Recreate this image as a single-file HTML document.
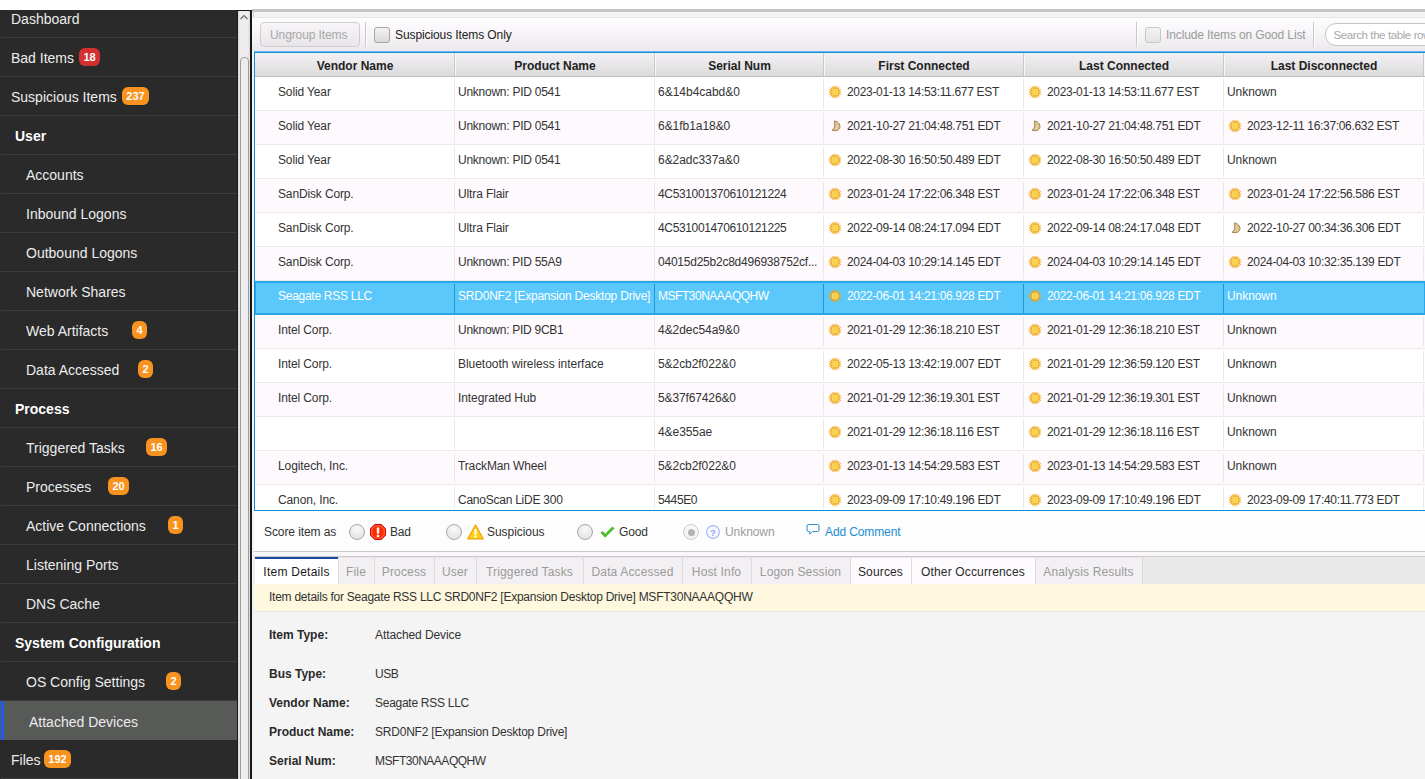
<!DOCTYPE html>
<html><head><meta charset="utf-8"><style>
html,body{margin:0;padding:0;}
body{width:1425px;height:779px;overflow:hidden;position:relative;background:#fff;font-family:"Liberation Sans", sans-serif;}
.t{position:absolute;white-space:nowrap;line-height:1;}
.ic{position:absolute;}
.badge{position:absolute;height:18px;border-radius:6px;color:#fff;font-size:11px;font-weight:700;line-height:18px;text-align:center;}
.radio{position:absolute;width:14px;height:14px;border-radius:50%;border:1px solid #a8a8a8;background:radial-gradient(circle at 50% 30%,#fafafa,#dedede);}
</style></head><body>
<div style="position:absolute;left:0px;top:10px;width:238px;height:769px;background:#2a2a2a"></div><div class="t" style="left:11px;top:11.75px;font-size:14px;color:#ececec;font-weight:400;">Dashboard</div><div style="position:absolute;left:1px;top:37px;width:237px;height:1px;background:#3c3c3c"></div><div class="t" style="left:11px;top:50.75px;font-size:14px;color:#ececec;font-weight:400;">Bad Items</div><div class="badge" style="left:79px;top:48px;width:21px;background:#d3302f">18</div><div style="position:absolute;left:1px;top:76px;width:237px;height:1px;background:#3c3c3c"></div><div class="t" style="left:11px;top:89.75px;font-size:14px;color:#ececec;font-weight:400;">Suspicious Items</div><div class="badge" style="left:122px;top:87px;width:27px;background:#f7931e">237</div><div style="position:absolute;left:1px;top:115px;width:237px;height:1px;background:#3c3c3c"></div><div class="t" style="left:15px;top:128.75px;font-size:14px;color:#ffffff;font-weight:700;">User</div><div style="position:absolute;left:1px;top:154px;width:237px;height:1px;background:#3c3c3c"></div><div class="t" style="left:26px;top:167.75px;font-size:14px;color:#ececec;font-weight:400;">Accounts</div><div style="position:absolute;left:1px;top:193px;width:237px;height:1px;background:#3c3c3c"></div><div class="t" style="left:26px;top:206.75px;font-size:14px;color:#ececec;font-weight:400;">Inbound Logons</div><div style="position:absolute;left:1px;top:232px;width:237px;height:1px;background:#3c3c3c"></div><div class="t" style="left:26px;top:245.75px;font-size:14px;color:#ececec;font-weight:400;">Outbound Logons</div><div style="position:absolute;left:1px;top:271px;width:237px;height:1px;background:#3c3c3c"></div><div class="t" style="left:26px;top:284.75px;font-size:14px;color:#ececec;font-weight:400;">Network Shares</div><div style="position:absolute;left:1px;top:310px;width:237px;height:1px;background:#3c3c3c"></div><div class="t" style="left:26px;top:323.75px;font-size:14px;color:#ececec;font-weight:400;">Web Artifacts</div><div class="badge" style="left:132px;top:321px;width:15px;background:#f7931e">4</div><div style="position:absolute;left:1px;top:349px;width:237px;height:1px;background:#3c3c3c"></div><div class="t" style="left:26px;top:362.75px;font-size:14px;color:#ececec;font-weight:400;">Data Accessed</div><div class="badge" style="left:138px;top:360px;width:15px;background:#f7931e">2</div><div style="position:absolute;left:1px;top:388px;width:237px;height:1px;background:#3c3c3c"></div><div class="t" style="left:15px;top:401.75px;font-size:14px;color:#ffffff;font-weight:700;">Process</div><div style="position:absolute;left:1px;top:427px;width:237px;height:1px;background:#3c3c3c"></div><div class="t" style="left:26px;top:440.75px;font-size:14px;color:#ececec;font-weight:400;">Triggered Tasks</div><div class="badge" style="left:146px;top:438px;width:21px;background:#f7931e">16</div><div style="position:absolute;left:1px;top:466px;width:237px;height:1px;background:#3c3c3c"></div><div class="t" style="left:26px;top:479.75px;font-size:14px;color:#ececec;font-weight:400;">Processes</div><div class="badge" style="left:108px;top:477px;width:21px;background:#f7931e">20</div><div style="position:absolute;left:1px;top:505px;width:237px;height:1px;background:#3c3c3c"></div><div class="t" style="left:26px;top:518.75px;font-size:14px;color:#ececec;font-weight:400;">Active Connections</div><div class="badge" style="left:168px;top:516px;width:15px;background:#f7931e">1</div><div style="position:absolute;left:1px;top:544px;width:237px;height:1px;background:#3c3c3c"></div><div class="t" style="left:26px;top:557.75px;font-size:14px;color:#ececec;font-weight:400;">Listening Ports</div><div style="position:absolute;left:1px;top:583px;width:237px;height:1px;background:#3c3c3c"></div><div class="t" style="left:26px;top:596.75px;font-size:14px;color:#ececec;font-weight:400;">DNS Cache</div><div style="position:absolute;left:1px;top:622px;width:237px;height:1px;background:#3c3c3c"></div><div class="t" style="left:15px;top:635.75px;font-size:14px;color:#ffffff;font-weight:700;">System Configuration</div><div style="position:absolute;left:1px;top:661px;width:237px;height:1px;background:#3c3c3c"></div><div class="t" style="left:26px;top:674.75px;font-size:14px;color:#ececec;font-weight:400;">OS Config Settings</div><div class="badge" style="left:166px;top:672px;width:15px;background:#f7931e">2</div><div style="position:absolute;left:1px;top:700px;width:237px;height:1px;background:#3c3c3c"></div><div style="position:absolute;left:0px;top:701px;width:238px;height:39px;background:#585a58"></div><div style="position:absolute;left:1px;top:701px;width:3px;height:39px;background:#1f5cf5"></div><div class="t" style="left:29px;top:714.55px;font-size:14px;color:#ececec;font-weight:400;">Attached Devices</div><div style="position:absolute;left:1px;top:778px;width:237px;height:1px;background:#3c3c3c"></div><div class="t" style="left:11px;top:752.75px;font-size:14px;color:#ececec;font-weight:400;">Files</div><div class="badge" style="left:44px;top:750px;width:27px;background:#f7931e">192</div><div style="position:absolute;left:238px;top:10px;width:12px;height:769px;background:linear-gradient(to right,#d8d6d8,#eeecee 20%,#eeecee 80%,#dcdadc)"></div><svg style="position:absolute;left:238px;top:12px" width="12" height="10"><path d="M2.5 7 L6 3.5 L9.5 7" fill="none" stroke="#6e6e6e" stroke-width="1.2"/></svg><div style="position:absolute;left:240px;top:57px;width:7px;height:730px;background:#ededed;border:1px solid #9c9c9c;border-radius:4px"></div><div style="position:absolute;left:250px;top:10px;width:2px;height:769px;background:#161616"></div><div style="position:absolute;left:237px;top:10px;width:15px;height:1px;background:#161616"></div><div style="position:absolute;left:237px;top:10px;width:1px;height:769px;background:#1c1c1c"></div><div style="position:absolute;left:252px;top:9px;width:1173px;height:770px;background:#f2f2f2"></div><div style="position:absolute;left:252px;top:9px;width:1173px;height:3px;background:#c4c4c4"></div><div style="position:absolute;left:252px;top:12px;width:1173px;height:5px;background:#f4f4f4;border-bottom:1px solid #e6e6e6"></div><div style="position:absolute;left:253px;top:12px;width:1px;height:5px;background:#d0d0d0"></div><div style="position:absolute;left:252px;top:18px;width:1173px;height:33px;background:linear-gradient(#fdfbfd,#fbf9fb 25%,#ebe9eb)"></div><div style="position:absolute;left:260px;top:22px;width:98px;height:23px;border:1px solid #cfcdcf;border-radius:4px;background:linear-gradient(#f7f5f7,#e8e6e8)"></div><div class="t" style="left:270px;top:28.64px;font-size:12px;color:#a8a8a8;font-weight:400;letter-spacing:-0.100px;">Ungroup Items</div><div style="position:absolute;left:365px;top:22px;width:1px;height:25px;background:#c9c7c9;box-shadow:1px 0 0 #fff"></div><div style="position:absolute;left:374px;top:27px;width:14px;height:14px;border:1px solid #a6a6a6;border-radius:3px;background:linear-gradient(#f3f3f3,#d9d9d9)"></div><div class="t" style="left:395px;top:28.64px;font-size:12px;color:#222;font-weight:400;letter-spacing:-0.100px;">Suspicious Items Only</div><div style="position:absolute;left:1136px;top:22px;width:1px;height:25px;background:#c9c7c9;box-shadow:1px 0 0 #fff"></div><div style="position:absolute;left:1145px;top:27px;width:14px;height:14px;border:1px solid #c8c8c8;border-radius:3px;background:linear-gradient(#f3f3f3,#e4e4e4)"></div><div class="t" style="left:1166px;top:28.64px;font-size:12px;color:#9a9a9a;font-weight:400;letter-spacing:-0.123px;">Include Items on Good List</div><div style="position:absolute;left:1313px;top:22px;width:1px;height:25px;background:#c9c7c9;box-shadow:1px 0 0 #fff"></div><div style="position:absolute;left:1325px;top:23px;width:120px;height:21px;border:1px solid #c6c6c6;border-radius:11px;background:#fff"></div><div class="t" style="left:1333.5px;top:29.57px;font-size:11.5px;color:#a8a8a8;font-weight:400;letter-spacing:-0.4px;">Search the table rows</div><div style="position:absolute;left:254px;top:51px;width:1171px;height:1px;background:#6cbde6"></div><div style="position:absolute;left:254px;top:52px;width:1171px;height:1px;background:#0a90d8"></div><div style="position:absolute;left:254px;top:52px;width:1px;height:459px;background:#0a90d8"></div><div style="position:absolute;left:254px;top:510px;width:1171px;height:1px;background:#0a90d8"></div><div style="position:absolute;left:255px;top:53px;width:1170px;height:23px;background:linear-gradient(#f3f1f3,#e9e7e9 45%,#dcdcdc)"></div><div style="position:absolute;left:255px;top:76px;width:1170px;height:1px;background:#bdbdbd"></div><div class="t" style="left:255px;width:200px;top:59.84px;font-size:12px;font-weight:700;color:#222;text-align:center">Vendor Name</div><div style="position:absolute;left:454px;top:53px;width:1px;height:23px;background:#c8c8c8;box-shadow:1px 0 0 #f8f8f8"></div><div class="t" style="left:455px;width:200px;top:59.84px;font-size:12px;font-weight:700;color:#222;text-align:center">Product Name</div><div style="position:absolute;left:654px;top:53px;width:1px;height:23px;background:#c8c8c8;box-shadow:1px 0 0 #f8f8f8"></div><div class="t" style="left:655px;width:169px;top:59.84px;font-size:12px;font-weight:700;color:#222;text-align:center">Serial Num</div><div style="position:absolute;left:823px;top:53px;width:1px;height:23px;background:#c8c8c8;box-shadow:1px 0 0 #f8f8f8"></div><div class="t" style="left:824px;width:200px;top:59.84px;font-size:12px;font-weight:700;color:#222;text-align:center">First Connected</div><div style="position:absolute;left:1023px;top:53px;width:1px;height:23px;background:#c8c8c8;box-shadow:1px 0 0 #f8f8f8"></div><div class="t" style="left:1024px;width:200px;top:59.84px;font-size:12px;font-weight:700;color:#222;text-align:center">Last Connected</div><div style="position:absolute;left:1223px;top:53px;width:1px;height:23px;background:#c8c8c8;box-shadow:1px 0 0 #f8f8f8"></div><div class="t" style="left:1224px;width:200px;top:59.84px;font-size:12px;font-weight:700;color:#222;text-align:center">Last Disconnected</div><div style="position:absolute;left:1423px;top:53px;width:1px;height:23px;background:#c8c8c8;box-shadow:1px 0 0 #f8f8f8"></div><div style="position:absolute;left:0;top:0;width:1425px;height:510px;overflow:hidden"><div style="position:absolute;left:255px;top:77px;width:1170px;height:34px;background:#ffffff"></div><div style="position:absolute;left:255px;top:110px;width:1170px;height:1px;background:#ebe9eb"></div><div style="position:absolute;left:454px;top:79px;width:1px;height:30px;background:#e9e7e9"></div><div style="position:absolute;left:654px;top:79px;width:1px;height:30px;background:#e9e7e9"></div><div style="position:absolute;left:823px;top:79px;width:1px;height:30px;background:#e9e7e9"></div><div style="position:absolute;left:1023px;top:79px;width:1px;height:30px;background:#e9e7e9"></div><div style="position:absolute;left:1223px;top:79px;width:1px;height:30px;background:#e9e7e9"></div><div style="position:absolute;left:1423px;top:79px;width:1px;height:30px;background:#e9e7e9"></div><div class="t" style="left:278px;top:85.84px;font-size:12px;color:#333333;font-weight:400;letter-spacing:-0.130px;">Solid Year</div><div class="t" style="left:458px;top:85.84px;font-size:12px;color:#333333;font-weight:400;letter-spacing:-0.253px;">Unknown: PID 0541</div><div class="t" style="left:658px;top:85.84px;font-size:12px;color:#333333;font-weight:400;letter-spacing:-0.012px;">6&amp;14b4cabd&amp;0</div><svg class="ic" width="14" height="14" viewBox="0 0 14 14" style="left:828px;top:85px"><defs><radialGradient id="sg"><stop offset="0" stop-color="#f8d552"/><stop offset="0.7" stop-color="#f7d04c"/><stop offset="0.88" stop-color="#fce488"/><stop offset="1" stop-color="#f0b02a"/></radialGradient></defs><g fill="#eea10c"><polygon points="6.75,0.5 7.25,0.5 8.05,4 5.95,4" transform="rotate(0.0 7 7)"/><polygon points="6.75,0.5 7.25,0.5 8.05,4 5.95,4" transform="rotate(22.5 7 7)"/><polygon points="6.75,0.5 7.25,0.5 8.05,4 5.95,4" transform="rotate(45.0 7 7)"/><polygon points="6.75,0.5 7.25,0.5 8.05,4 5.95,4" transform="rotate(67.5 7 7)"/><polygon points="6.75,0.5 7.25,0.5 8.05,4 5.95,4" transform="rotate(90.0 7 7)"/><polygon points="6.75,0.5 7.25,0.5 8.05,4 5.95,4" transform="rotate(112.5 7 7)"/><polygon points="6.75,0.5 7.25,0.5 8.05,4 5.95,4" transform="rotate(135.0 7 7)"/><polygon points="6.75,0.5 7.25,0.5 8.05,4 5.95,4" transform="rotate(157.5 7 7)"/><polygon points="6.75,0.5 7.25,0.5 8.05,4 5.95,4" transform="rotate(180.0 7 7)"/><polygon points="6.75,0.5 7.25,0.5 8.05,4 5.95,4" transform="rotate(202.5 7 7)"/><polygon points="6.75,0.5 7.25,0.5 8.05,4 5.95,4" transform="rotate(225.0 7 7)"/><polygon points="6.75,0.5 7.25,0.5 8.05,4 5.95,4" transform="rotate(247.5 7 7)"/><polygon points="6.75,0.5 7.25,0.5 8.05,4 5.95,4" transform="rotate(270.0 7 7)"/><polygon points="6.75,0.5 7.25,0.5 8.05,4 5.95,4" transform="rotate(292.5 7 7)"/><polygon points="6.75,0.5 7.25,0.5 8.05,4 5.95,4" transform="rotate(315.0 7 7)"/><polygon points="6.75,0.5 7.25,0.5 8.05,4 5.95,4" transform="rotate(337.5 7 7)"/></g><circle cx="7" cy="7" r="3.8" fill="url(#sg)"/></svg><div class="t" style="left:847px;top:85.84px;font-size:12px;color:#333333;font-weight:400;letter-spacing:-0.320px;">2023-01-13 14:53:11.677 EST</div><svg class="ic" width="14" height="14" viewBox="0 0 14 14" style="left:1028px;top:85px"><defs><radialGradient id="sg"><stop offset="0" stop-color="#f8d552"/><stop offset="0.7" stop-color="#f7d04c"/><stop offset="0.88" stop-color="#fce488"/><stop offset="1" stop-color="#f0b02a"/></radialGradient></defs><g fill="#eea10c"><polygon points="6.75,0.5 7.25,0.5 8.05,4 5.95,4" transform="rotate(0.0 7 7)"/><polygon points="6.75,0.5 7.25,0.5 8.05,4 5.95,4" transform="rotate(22.5 7 7)"/><polygon points="6.75,0.5 7.25,0.5 8.05,4 5.95,4" transform="rotate(45.0 7 7)"/><polygon points="6.75,0.5 7.25,0.5 8.05,4 5.95,4" transform="rotate(67.5 7 7)"/><polygon points="6.75,0.5 7.25,0.5 8.05,4 5.95,4" transform="rotate(90.0 7 7)"/><polygon points="6.75,0.5 7.25,0.5 8.05,4 5.95,4" transform="rotate(112.5 7 7)"/><polygon points="6.75,0.5 7.25,0.5 8.05,4 5.95,4" transform="rotate(135.0 7 7)"/><polygon points="6.75,0.5 7.25,0.5 8.05,4 5.95,4" transform="rotate(157.5 7 7)"/><polygon points="6.75,0.5 7.25,0.5 8.05,4 5.95,4" transform="rotate(180.0 7 7)"/><polygon points="6.75,0.5 7.25,0.5 8.05,4 5.95,4" transform="rotate(202.5 7 7)"/><polygon points="6.75,0.5 7.25,0.5 8.05,4 5.95,4" transform="rotate(225.0 7 7)"/><polygon points="6.75,0.5 7.25,0.5 8.05,4 5.95,4" transform="rotate(247.5 7 7)"/><polygon points="6.75,0.5 7.25,0.5 8.05,4 5.95,4" transform="rotate(270.0 7 7)"/><polygon points="6.75,0.5 7.25,0.5 8.05,4 5.95,4" transform="rotate(292.5 7 7)"/><polygon points="6.75,0.5 7.25,0.5 8.05,4 5.95,4" transform="rotate(315.0 7 7)"/><polygon points="6.75,0.5 7.25,0.5 8.05,4 5.95,4" transform="rotate(337.5 7 7)"/></g><circle cx="7" cy="7" r="3.8" fill="url(#sg)"/></svg><div class="t" style="left:1047px;top:85.84px;font-size:12px;color:#333333;font-weight:400;letter-spacing:-0.320px;">2023-01-13 14:53:11.677 EST</div><div class="t" style="left:1227px;top:85.84px;font-size:12px;color:#333333;font-weight:400;letter-spacing:-0.071px;">Unknown</div><div style="position:absolute;left:255px;top:111px;width:1170px;height:34px;background:#fdf9fd"></div><div style="position:absolute;left:255px;top:144px;width:1170px;height:1px;background:#ebe9eb"></div><div style="position:absolute;left:454px;top:113px;width:1px;height:30px;background:#e9e7e9"></div><div style="position:absolute;left:654px;top:113px;width:1px;height:30px;background:#e9e7e9"></div><div style="position:absolute;left:823px;top:113px;width:1px;height:30px;background:#e9e7e9"></div><div style="position:absolute;left:1023px;top:113px;width:1px;height:30px;background:#e9e7e9"></div><div style="position:absolute;left:1223px;top:113px;width:1px;height:30px;background:#e9e7e9"></div><div style="position:absolute;left:1423px;top:113px;width:1px;height:30px;background:#e9e7e9"></div><div class="t" style="left:278px;top:119.84px;font-size:12px;color:#333333;font-weight:400;letter-spacing:-0.130px;">Solid Year</div><div class="t" style="left:458px;top:119.84px;font-size:12px;color:#333333;font-weight:400;letter-spacing:-0.253px;">Unknown: PID 0541</div><div class="t" style="left:658px;top:119.84px;font-size:12px;color:#333333;font-weight:400;letter-spacing:-0.045px;">6&amp;1fb1a18&amp;0</div><svg class="ic" width="14" height="14" viewBox="0 0 14 14" style="left:828px;top:119px"><path d="M6.4 2.0 C10 2.3 12.2 5.2 11.9 8.2 C11.5 11.2 7.8 12.5 4.0 11.2 C5.8 10.2 6.8 8.4 6.8 6.0 C6.8 4.4 6.7 3.0 6.4 2.0 Z" fill="#dccb94" stroke="#a47c52" stroke-width="1"/></svg><div class="t" style="left:847px;top:119.84px;font-size:12px;color:#333333;font-weight:400;letter-spacing:-0.320px;">2021-10-27 21:04:48.751 EDT</div><svg class="ic" width="14" height="14" viewBox="0 0 14 14" style="left:1028px;top:119px"><path d="M6.4 2.0 C10 2.3 12.2 5.2 11.9 8.2 C11.5 11.2 7.8 12.5 4.0 11.2 C5.8 10.2 6.8 8.4 6.8 6.0 C6.8 4.4 6.7 3.0 6.4 2.0 Z" fill="#dccb94" stroke="#a47c52" stroke-width="1"/></svg><div class="t" style="left:1047px;top:119.84px;font-size:12px;color:#333333;font-weight:400;letter-spacing:-0.320px;">2021-10-27 21:04:48.751 EDT</div><svg class="ic" width="14" height="14" viewBox="0 0 14 14" style="left:1228px;top:119px"><defs><radialGradient id="sg"><stop offset="0" stop-color="#f8d552"/><stop offset="0.7" stop-color="#f7d04c"/><stop offset="0.88" stop-color="#fce488"/><stop offset="1" stop-color="#f0b02a"/></radialGradient></defs><g fill="#eea10c"><polygon points="6.75,0.5 7.25,0.5 8.05,4 5.95,4" transform="rotate(0.0 7 7)"/><polygon points="6.75,0.5 7.25,0.5 8.05,4 5.95,4" transform="rotate(22.5 7 7)"/><polygon points="6.75,0.5 7.25,0.5 8.05,4 5.95,4" transform="rotate(45.0 7 7)"/><polygon points="6.75,0.5 7.25,0.5 8.05,4 5.95,4" transform="rotate(67.5 7 7)"/><polygon points="6.75,0.5 7.25,0.5 8.05,4 5.95,4" transform="rotate(90.0 7 7)"/><polygon points="6.75,0.5 7.25,0.5 8.05,4 5.95,4" transform="rotate(112.5 7 7)"/><polygon points="6.75,0.5 7.25,0.5 8.05,4 5.95,4" transform="rotate(135.0 7 7)"/><polygon points="6.75,0.5 7.25,0.5 8.05,4 5.95,4" transform="rotate(157.5 7 7)"/><polygon points="6.75,0.5 7.25,0.5 8.05,4 5.95,4" transform="rotate(180.0 7 7)"/><polygon points="6.75,0.5 7.25,0.5 8.05,4 5.95,4" transform="rotate(202.5 7 7)"/><polygon points="6.75,0.5 7.25,0.5 8.05,4 5.95,4" transform="rotate(225.0 7 7)"/><polygon points="6.75,0.5 7.25,0.5 8.05,4 5.95,4" transform="rotate(247.5 7 7)"/><polygon points="6.75,0.5 7.25,0.5 8.05,4 5.95,4" transform="rotate(270.0 7 7)"/><polygon points="6.75,0.5 7.25,0.5 8.05,4 5.95,4" transform="rotate(292.5 7 7)"/><polygon points="6.75,0.5 7.25,0.5 8.05,4 5.95,4" transform="rotate(315.0 7 7)"/><polygon points="6.75,0.5 7.25,0.5 8.05,4 5.95,4" transform="rotate(337.5 7 7)"/></g><circle cx="7" cy="7" r="3.8" fill="url(#sg)"/></svg><div class="t" style="left:1247px;top:119.84px;font-size:12px;color:#333333;font-weight:400;letter-spacing:-0.320px;">2023-12-11 16:37:06.632 EST</div><div style="position:absolute;left:255px;top:145px;width:1170px;height:34px;background:#ffffff"></div><div style="position:absolute;left:255px;top:178px;width:1170px;height:1px;background:#ebe9eb"></div><div style="position:absolute;left:454px;top:147px;width:1px;height:30px;background:#e9e7e9"></div><div style="position:absolute;left:654px;top:147px;width:1px;height:30px;background:#e9e7e9"></div><div style="position:absolute;left:823px;top:147px;width:1px;height:30px;background:#e9e7e9"></div><div style="position:absolute;left:1023px;top:147px;width:1px;height:30px;background:#e9e7e9"></div><div style="position:absolute;left:1223px;top:147px;width:1px;height:30px;background:#e9e7e9"></div><div style="position:absolute;left:1423px;top:147px;width:1px;height:30px;background:#e9e7e9"></div><div class="t" style="left:278px;top:153.84px;font-size:12px;color:#333333;font-weight:400;letter-spacing:-0.130px;">Solid Year</div><div class="t" style="left:458px;top:153.84px;font-size:12px;color:#333333;font-weight:400;letter-spacing:-0.253px;">Unknown: PID 0541</div><div class="t" style="left:658px;top:153.84px;font-size:12px;color:#333333;font-weight:400;letter-spacing:-0.042px;">6&amp;2adc337a&amp;0</div><svg class="ic" width="14" height="14" viewBox="0 0 14 14" style="left:828px;top:153px"><defs><radialGradient id="sg"><stop offset="0" stop-color="#f8d552"/><stop offset="0.7" stop-color="#f7d04c"/><stop offset="0.88" stop-color="#fce488"/><stop offset="1" stop-color="#f0b02a"/></radialGradient></defs><g fill="#eea10c"><polygon points="6.75,0.5 7.25,0.5 8.05,4 5.95,4" transform="rotate(0.0 7 7)"/><polygon points="6.75,0.5 7.25,0.5 8.05,4 5.95,4" transform="rotate(22.5 7 7)"/><polygon points="6.75,0.5 7.25,0.5 8.05,4 5.95,4" transform="rotate(45.0 7 7)"/><polygon points="6.75,0.5 7.25,0.5 8.05,4 5.95,4" transform="rotate(67.5 7 7)"/><polygon points="6.75,0.5 7.25,0.5 8.05,4 5.95,4" transform="rotate(90.0 7 7)"/><polygon points="6.75,0.5 7.25,0.5 8.05,4 5.95,4" transform="rotate(112.5 7 7)"/><polygon points="6.75,0.5 7.25,0.5 8.05,4 5.95,4" transform="rotate(135.0 7 7)"/><polygon points="6.75,0.5 7.25,0.5 8.05,4 5.95,4" transform="rotate(157.5 7 7)"/><polygon points="6.75,0.5 7.25,0.5 8.05,4 5.95,4" transform="rotate(180.0 7 7)"/><polygon points="6.75,0.5 7.25,0.5 8.05,4 5.95,4" transform="rotate(202.5 7 7)"/><polygon points="6.75,0.5 7.25,0.5 8.05,4 5.95,4" transform="rotate(225.0 7 7)"/><polygon points="6.75,0.5 7.25,0.5 8.05,4 5.95,4" transform="rotate(247.5 7 7)"/><polygon points="6.75,0.5 7.25,0.5 8.05,4 5.95,4" transform="rotate(270.0 7 7)"/><polygon points="6.75,0.5 7.25,0.5 8.05,4 5.95,4" transform="rotate(292.5 7 7)"/><polygon points="6.75,0.5 7.25,0.5 8.05,4 5.95,4" transform="rotate(315.0 7 7)"/><polygon points="6.75,0.5 7.25,0.5 8.05,4 5.95,4" transform="rotate(337.5 7 7)"/></g><circle cx="7" cy="7" r="3.8" fill="url(#sg)"/></svg><div class="t" style="left:847px;top:153.84px;font-size:12px;color:#333333;font-weight:400;letter-spacing:-0.320px;">2022-08-30 16:50:50.489 EDT</div><svg class="ic" width="14" height="14" viewBox="0 0 14 14" style="left:1028px;top:153px"><defs><radialGradient id="sg"><stop offset="0" stop-color="#f8d552"/><stop offset="0.7" stop-color="#f7d04c"/><stop offset="0.88" stop-color="#fce488"/><stop offset="1" stop-color="#f0b02a"/></radialGradient></defs><g fill="#eea10c"><polygon points="6.75,0.5 7.25,0.5 8.05,4 5.95,4" transform="rotate(0.0 7 7)"/><polygon points="6.75,0.5 7.25,0.5 8.05,4 5.95,4" transform="rotate(22.5 7 7)"/><polygon points="6.75,0.5 7.25,0.5 8.05,4 5.95,4" transform="rotate(45.0 7 7)"/><polygon points="6.75,0.5 7.25,0.5 8.05,4 5.95,4" transform="rotate(67.5 7 7)"/><polygon points="6.75,0.5 7.25,0.5 8.05,4 5.95,4" transform="rotate(90.0 7 7)"/><polygon points="6.75,0.5 7.25,0.5 8.05,4 5.95,4" transform="rotate(112.5 7 7)"/><polygon points="6.75,0.5 7.25,0.5 8.05,4 5.95,4" transform="rotate(135.0 7 7)"/><polygon points="6.75,0.5 7.25,0.5 8.05,4 5.95,4" transform="rotate(157.5 7 7)"/><polygon points="6.75,0.5 7.25,0.5 8.05,4 5.95,4" transform="rotate(180.0 7 7)"/><polygon points="6.75,0.5 7.25,0.5 8.05,4 5.95,4" transform="rotate(202.5 7 7)"/><polygon points="6.75,0.5 7.25,0.5 8.05,4 5.95,4" transform="rotate(225.0 7 7)"/><polygon points="6.75,0.5 7.25,0.5 8.05,4 5.95,4" transform="rotate(247.5 7 7)"/><polygon points="6.75,0.5 7.25,0.5 8.05,4 5.95,4" transform="rotate(270.0 7 7)"/><polygon points="6.75,0.5 7.25,0.5 8.05,4 5.95,4" transform="rotate(292.5 7 7)"/><polygon points="6.75,0.5 7.25,0.5 8.05,4 5.95,4" transform="rotate(315.0 7 7)"/><polygon points="6.75,0.5 7.25,0.5 8.05,4 5.95,4" transform="rotate(337.5 7 7)"/></g><circle cx="7" cy="7" r="3.8" fill="url(#sg)"/></svg><div class="t" style="left:1047px;top:153.84px;font-size:12px;color:#333333;font-weight:400;letter-spacing:-0.320px;">2022-08-30 16:50:50.489 EDT</div><div class="t" style="left:1227px;top:153.84px;font-size:12px;color:#333333;font-weight:400;letter-spacing:-0.071px;">Unknown</div><div style="position:absolute;left:255px;top:179px;width:1170px;height:34px;background:#fdf9fd"></div><div style="position:absolute;left:255px;top:212px;width:1170px;height:1px;background:#ebe9eb"></div><div style="position:absolute;left:454px;top:181px;width:1px;height:30px;background:#e9e7e9"></div><div style="position:absolute;left:654px;top:181px;width:1px;height:30px;background:#e9e7e9"></div><div style="position:absolute;left:823px;top:181px;width:1px;height:30px;background:#e9e7e9"></div><div style="position:absolute;left:1023px;top:181px;width:1px;height:30px;background:#e9e7e9"></div><div style="position:absolute;left:1223px;top:181px;width:1px;height:30px;background:#e9e7e9"></div><div style="position:absolute;left:1423px;top:181px;width:1px;height:30px;background:#e9e7e9"></div><div class="t" style="left:278px;top:187.84px;font-size:12px;color:#333333;font-weight:400;letter-spacing:-0.138px;">SanDisk Corp.</div><div class="t" style="left:458px;top:187.84px;font-size:12px;color:#333333;font-weight:400;letter-spacing:-0.118px;">Ultra Flair</div><div class="t" style="left:658px;top:187.84px;font-size:12px;color:#333333;font-weight:400;letter-spacing:-0.357px;">4C531001370610121224</div><svg class="ic" width="14" height="14" viewBox="0 0 14 14" style="left:828px;top:187px"><defs><radialGradient id="sg"><stop offset="0" stop-color="#f8d552"/><stop offset="0.7" stop-color="#f7d04c"/><stop offset="0.88" stop-color="#fce488"/><stop offset="1" stop-color="#f0b02a"/></radialGradient></defs><g fill="#eea10c"><polygon points="6.75,0.5 7.25,0.5 8.05,4 5.95,4" transform="rotate(0.0 7 7)"/><polygon points="6.75,0.5 7.25,0.5 8.05,4 5.95,4" transform="rotate(22.5 7 7)"/><polygon points="6.75,0.5 7.25,0.5 8.05,4 5.95,4" transform="rotate(45.0 7 7)"/><polygon points="6.75,0.5 7.25,0.5 8.05,4 5.95,4" transform="rotate(67.5 7 7)"/><polygon points="6.75,0.5 7.25,0.5 8.05,4 5.95,4" transform="rotate(90.0 7 7)"/><polygon points="6.75,0.5 7.25,0.5 8.05,4 5.95,4" transform="rotate(112.5 7 7)"/><polygon points="6.75,0.5 7.25,0.5 8.05,4 5.95,4" transform="rotate(135.0 7 7)"/><polygon points="6.75,0.5 7.25,0.5 8.05,4 5.95,4" transform="rotate(157.5 7 7)"/><polygon points="6.75,0.5 7.25,0.5 8.05,4 5.95,4" transform="rotate(180.0 7 7)"/><polygon points="6.75,0.5 7.25,0.5 8.05,4 5.95,4" transform="rotate(202.5 7 7)"/><polygon points="6.75,0.5 7.25,0.5 8.05,4 5.95,4" transform="rotate(225.0 7 7)"/><polygon points="6.75,0.5 7.25,0.5 8.05,4 5.95,4" transform="rotate(247.5 7 7)"/><polygon points="6.75,0.5 7.25,0.5 8.05,4 5.95,4" transform="rotate(270.0 7 7)"/><polygon points="6.75,0.5 7.25,0.5 8.05,4 5.95,4" transform="rotate(292.5 7 7)"/><polygon points="6.75,0.5 7.25,0.5 8.05,4 5.95,4" transform="rotate(315.0 7 7)"/><polygon points="6.75,0.5 7.25,0.5 8.05,4 5.95,4" transform="rotate(337.5 7 7)"/></g><circle cx="7" cy="7" r="3.8" fill="url(#sg)"/></svg><div class="t" style="left:847px;top:187.84px;font-size:12px;color:#333333;font-weight:400;letter-spacing:-0.320px;">2023-01-24 17:22:06.348 EST</div><svg class="ic" width="14" height="14" viewBox="0 0 14 14" style="left:1028px;top:187px"><defs><radialGradient id="sg"><stop offset="0" stop-color="#f8d552"/><stop offset="0.7" stop-color="#f7d04c"/><stop offset="0.88" stop-color="#fce488"/><stop offset="1" stop-color="#f0b02a"/></radialGradient></defs><g fill="#eea10c"><polygon points="6.75,0.5 7.25,0.5 8.05,4 5.95,4" transform="rotate(0.0 7 7)"/><polygon points="6.75,0.5 7.25,0.5 8.05,4 5.95,4" transform="rotate(22.5 7 7)"/><polygon points="6.75,0.5 7.25,0.5 8.05,4 5.95,4" transform="rotate(45.0 7 7)"/><polygon points="6.75,0.5 7.25,0.5 8.05,4 5.95,4" transform="rotate(67.5 7 7)"/><polygon points="6.75,0.5 7.25,0.5 8.05,4 5.95,4" transform="rotate(90.0 7 7)"/><polygon points="6.75,0.5 7.25,0.5 8.05,4 5.95,4" transform="rotate(112.5 7 7)"/><polygon points="6.75,0.5 7.25,0.5 8.05,4 5.95,4" transform="rotate(135.0 7 7)"/><polygon points="6.75,0.5 7.25,0.5 8.05,4 5.95,4" transform="rotate(157.5 7 7)"/><polygon points="6.75,0.5 7.25,0.5 8.05,4 5.95,4" transform="rotate(180.0 7 7)"/><polygon points="6.75,0.5 7.25,0.5 8.05,4 5.95,4" transform="rotate(202.5 7 7)"/><polygon points="6.75,0.5 7.25,0.5 8.05,4 5.95,4" transform="rotate(225.0 7 7)"/><polygon points="6.75,0.5 7.25,0.5 8.05,4 5.95,4" transform="rotate(247.5 7 7)"/><polygon points="6.75,0.5 7.25,0.5 8.05,4 5.95,4" transform="rotate(270.0 7 7)"/><polygon points="6.75,0.5 7.25,0.5 8.05,4 5.95,4" transform="rotate(292.5 7 7)"/><polygon points="6.75,0.5 7.25,0.5 8.05,4 5.95,4" transform="rotate(315.0 7 7)"/><polygon points="6.75,0.5 7.25,0.5 8.05,4 5.95,4" transform="rotate(337.5 7 7)"/></g><circle cx="7" cy="7" r="3.8" fill="url(#sg)"/></svg><div class="t" style="left:1047px;top:187.84px;font-size:12px;color:#333333;font-weight:400;letter-spacing:-0.320px;">2023-01-24 17:22:06.348 EST</div><svg class="ic" width="14" height="14" viewBox="0 0 14 14" style="left:1228px;top:187px"><defs><radialGradient id="sg"><stop offset="0" stop-color="#f8d552"/><stop offset="0.7" stop-color="#f7d04c"/><stop offset="0.88" stop-color="#fce488"/><stop offset="1" stop-color="#f0b02a"/></radialGradient></defs><g fill="#eea10c"><polygon points="6.75,0.5 7.25,0.5 8.05,4 5.95,4" transform="rotate(0.0 7 7)"/><polygon points="6.75,0.5 7.25,0.5 8.05,4 5.95,4" transform="rotate(22.5 7 7)"/><polygon points="6.75,0.5 7.25,0.5 8.05,4 5.95,4" transform="rotate(45.0 7 7)"/><polygon points="6.75,0.5 7.25,0.5 8.05,4 5.95,4" transform="rotate(67.5 7 7)"/><polygon points="6.75,0.5 7.25,0.5 8.05,4 5.95,4" transform="rotate(90.0 7 7)"/><polygon points="6.75,0.5 7.25,0.5 8.05,4 5.95,4" transform="rotate(112.5 7 7)"/><polygon points="6.75,0.5 7.25,0.5 8.05,4 5.95,4" transform="rotate(135.0 7 7)"/><polygon points="6.75,0.5 7.25,0.5 8.05,4 5.95,4" transform="rotate(157.5 7 7)"/><polygon points="6.75,0.5 7.25,0.5 8.05,4 5.95,4" transform="rotate(180.0 7 7)"/><polygon points="6.75,0.5 7.25,0.5 8.05,4 5.95,4" transform="rotate(202.5 7 7)"/><polygon points="6.75,0.5 7.25,0.5 8.05,4 5.95,4" transform="rotate(225.0 7 7)"/><polygon points="6.75,0.5 7.25,0.5 8.05,4 5.95,4" transform="rotate(247.5 7 7)"/><polygon points="6.75,0.5 7.25,0.5 8.05,4 5.95,4" transform="rotate(270.0 7 7)"/><polygon points="6.75,0.5 7.25,0.5 8.05,4 5.95,4" transform="rotate(292.5 7 7)"/><polygon points="6.75,0.5 7.25,0.5 8.05,4 5.95,4" transform="rotate(315.0 7 7)"/><polygon points="6.75,0.5 7.25,0.5 8.05,4 5.95,4" transform="rotate(337.5 7 7)"/></g><circle cx="7" cy="7" r="3.8" fill="url(#sg)"/></svg><div class="t" style="left:1247px;top:187.84px;font-size:12px;color:#333333;font-weight:400;letter-spacing:-0.320px;">2023-01-24 17:22:56.586 EST</div><div style="position:absolute;left:255px;top:213px;width:1170px;height:34px;background:#ffffff"></div><div style="position:absolute;left:255px;top:246px;width:1170px;height:1px;background:#ebe9eb"></div><div style="position:absolute;left:454px;top:215px;width:1px;height:30px;background:#e9e7e9"></div><div style="position:absolute;left:654px;top:215px;width:1px;height:30px;background:#e9e7e9"></div><div style="position:absolute;left:823px;top:215px;width:1px;height:30px;background:#e9e7e9"></div><div style="position:absolute;left:1023px;top:215px;width:1px;height:30px;background:#e9e7e9"></div><div style="position:absolute;left:1223px;top:215px;width:1px;height:30px;background:#e9e7e9"></div><div style="position:absolute;left:1423px;top:215px;width:1px;height:30px;background:#e9e7e9"></div><div class="t" style="left:278px;top:221.84px;font-size:12px;color:#333333;font-weight:400;letter-spacing:-0.138px;">SanDisk Corp.</div><div class="t" style="left:458px;top:221.84px;font-size:12px;color:#333333;font-weight:400;letter-spacing:-0.118px;">Ultra Flair</div><div class="t" style="left:658px;top:221.84px;font-size:12px;color:#333333;font-weight:400;letter-spacing:-0.357px;">4C531001470610121225</div><svg class="ic" width="14" height="14" viewBox="0 0 14 14" style="left:828px;top:221px"><defs><radialGradient id="sg"><stop offset="0" stop-color="#f8d552"/><stop offset="0.7" stop-color="#f7d04c"/><stop offset="0.88" stop-color="#fce488"/><stop offset="1" stop-color="#f0b02a"/></radialGradient></defs><g fill="#eea10c"><polygon points="6.75,0.5 7.25,0.5 8.05,4 5.95,4" transform="rotate(0.0 7 7)"/><polygon points="6.75,0.5 7.25,0.5 8.05,4 5.95,4" transform="rotate(22.5 7 7)"/><polygon points="6.75,0.5 7.25,0.5 8.05,4 5.95,4" transform="rotate(45.0 7 7)"/><polygon points="6.75,0.5 7.25,0.5 8.05,4 5.95,4" transform="rotate(67.5 7 7)"/><polygon points="6.75,0.5 7.25,0.5 8.05,4 5.95,4" transform="rotate(90.0 7 7)"/><polygon points="6.75,0.5 7.25,0.5 8.05,4 5.95,4" transform="rotate(112.5 7 7)"/><polygon points="6.75,0.5 7.25,0.5 8.05,4 5.95,4" transform="rotate(135.0 7 7)"/><polygon points="6.75,0.5 7.25,0.5 8.05,4 5.95,4" transform="rotate(157.5 7 7)"/><polygon points="6.75,0.5 7.25,0.5 8.05,4 5.95,4" transform="rotate(180.0 7 7)"/><polygon points="6.75,0.5 7.25,0.5 8.05,4 5.95,4" transform="rotate(202.5 7 7)"/><polygon points="6.75,0.5 7.25,0.5 8.05,4 5.95,4" transform="rotate(225.0 7 7)"/><polygon points="6.75,0.5 7.25,0.5 8.05,4 5.95,4" transform="rotate(247.5 7 7)"/><polygon points="6.75,0.5 7.25,0.5 8.05,4 5.95,4" transform="rotate(270.0 7 7)"/><polygon points="6.75,0.5 7.25,0.5 8.05,4 5.95,4" transform="rotate(292.5 7 7)"/><polygon points="6.75,0.5 7.25,0.5 8.05,4 5.95,4" transform="rotate(315.0 7 7)"/><polygon points="6.75,0.5 7.25,0.5 8.05,4 5.95,4" transform="rotate(337.5 7 7)"/></g><circle cx="7" cy="7" r="3.8" fill="url(#sg)"/></svg><div class="t" style="left:847px;top:221.84px;font-size:12px;color:#333333;font-weight:400;letter-spacing:-0.320px;">2022-09-14 08:24:17.094 EDT</div><svg class="ic" width="14" height="14" viewBox="0 0 14 14" style="left:1028px;top:221px"><defs><radialGradient id="sg"><stop offset="0" stop-color="#f8d552"/><stop offset="0.7" stop-color="#f7d04c"/><stop offset="0.88" stop-color="#fce488"/><stop offset="1" stop-color="#f0b02a"/></radialGradient></defs><g fill="#eea10c"><polygon points="6.75,0.5 7.25,0.5 8.05,4 5.95,4" transform="rotate(0.0 7 7)"/><polygon points="6.75,0.5 7.25,0.5 8.05,4 5.95,4" transform="rotate(22.5 7 7)"/><polygon points="6.75,0.5 7.25,0.5 8.05,4 5.95,4" transform="rotate(45.0 7 7)"/><polygon points="6.75,0.5 7.25,0.5 8.05,4 5.95,4" transform="rotate(67.5 7 7)"/><polygon points="6.75,0.5 7.25,0.5 8.05,4 5.95,4" transform="rotate(90.0 7 7)"/><polygon points="6.75,0.5 7.25,0.5 8.05,4 5.95,4" transform="rotate(112.5 7 7)"/><polygon points="6.75,0.5 7.25,0.5 8.05,4 5.95,4" transform="rotate(135.0 7 7)"/><polygon points="6.75,0.5 7.25,0.5 8.05,4 5.95,4" transform="rotate(157.5 7 7)"/><polygon points="6.75,0.5 7.25,0.5 8.05,4 5.95,4" transform="rotate(180.0 7 7)"/><polygon points="6.75,0.5 7.25,0.5 8.05,4 5.95,4" transform="rotate(202.5 7 7)"/><polygon points="6.75,0.5 7.25,0.5 8.05,4 5.95,4" transform="rotate(225.0 7 7)"/><polygon points="6.75,0.5 7.25,0.5 8.05,4 5.95,4" transform="rotate(247.5 7 7)"/><polygon points="6.75,0.5 7.25,0.5 8.05,4 5.95,4" transform="rotate(270.0 7 7)"/><polygon points="6.75,0.5 7.25,0.5 8.05,4 5.95,4" transform="rotate(292.5 7 7)"/><polygon points="6.75,0.5 7.25,0.5 8.05,4 5.95,4" transform="rotate(315.0 7 7)"/><polygon points="6.75,0.5 7.25,0.5 8.05,4 5.95,4" transform="rotate(337.5 7 7)"/></g><circle cx="7" cy="7" r="3.8" fill="url(#sg)"/></svg><div class="t" style="left:1047px;top:221.84px;font-size:12px;color:#333333;font-weight:400;letter-spacing:-0.320px;">2022-09-14 08:24:17.048 EDT</div><svg class="ic" width="14" height="14" viewBox="0 0 14 14" style="left:1228px;top:221px"><path d="M6.4 2.0 C10 2.3 12.2 5.2 11.9 8.2 C11.5 11.2 7.8 12.5 4.0 11.2 C5.8 10.2 6.8 8.4 6.8 6.0 C6.8 4.4 6.7 3.0 6.4 2.0 Z" fill="#dccb94" stroke="#a47c52" stroke-width="1"/></svg><div class="t" style="left:1247px;top:221.84px;font-size:12px;color:#333333;font-weight:400;letter-spacing:-0.320px;">2022-10-27 00:34:36.306 EDT</div><div style="position:absolute;left:255px;top:247px;width:1170px;height:34px;background:#fdf9fd"></div><div style="position:absolute;left:255px;top:280px;width:1170px;height:1px;background:#ebe9eb"></div><div style="position:absolute;left:454px;top:249px;width:1px;height:30px;background:#e9e7e9"></div><div style="position:absolute;left:654px;top:249px;width:1px;height:30px;background:#e9e7e9"></div><div style="position:absolute;left:823px;top:249px;width:1px;height:30px;background:#e9e7e9"></div><div style="position:absolute;left:1023px;top:249px;width:1px;height:30px;background:#e9e7e9"></div><div style="position:absolute;left:1223px;top:249px;width:1px;height:30px;background:#e9e7e9"></div><div style="position:absolute;left:1423px;top:249px;width:1px;height:30px;background:#e9e7e9"></div><div class="t" style="left:278px;top:255.84px;font-size:12px;color:#333333;font-weight:400;letter-spacing:-0.138px;">SanDisk Corp.</div><div class="t" style="left:458px;top:255.84px;font-size:12px;color:#333333;font-weight:400;letter-spacing:-0.262px;">Unknown: PID 55A9</div><div class="t" style="left:658px;top:255.84px;font-size:12px;color:#333333;font-weight:400;letter-spacing:-0.233px;">04015d25b2c8d496938752cf...</div><svg class="ic" width="14" height="14" viewBox="0 0 14 14" style="left:828px;top:255px"><defs><radialGradient id="sg"><stop offset="0" stop-color="#f8d552"/><stop offset="0.7" stop-color="#f7d04c"/><stop offset="0.88" stop-color="#fce488"/><stop offset="1" stop-color="#f0b02a"/></radialGradient></defs><g fill="#eea10c"><polygon points="6.75,0.5 7.25,0.5 8.05,4 5.95,4" transform="rotate(0.0 7 7)"/><polygon points="6.75,0.5 7.25,0.5 8.05,4 5.95,4" transform="rotate(22.5 7 7)"/><polygon points="6.75,0.5 7.25,0.5 8.05,4 5.95,4" transform="rotate(45.0 7 7)"/><polygon points="6.75,0.5 7.25,0.5 8.05,4 5.95,4" transform="rotate(67.5 7 7)"/><polygon points="6.75,0.5 7.25,0.5 8.05,4 5.95,4" transform="rotate(90.0 7 7)"/><polygon points="6.75,0.5 7.25,0.5 8.05,4 5.95,4" transform="rotate(112.5 7 7)"/><polygon points="6.75,0.5 7.25,0.5 8.05,4 5.95,4" transform="rotate(135.0 7 7)"/><polygon points="6.75,0.5 7.25,0.5 8.05,4 5.95,4" transform="rotate(157.5 7 7)"/><polygon points="6.75,0.5 7.25,0.5 8.05,4 5.95,4" transform="rotate(180.0 7 7)"/><polygon points="6.75,0.5 7.25,0.5 8.05,4 5.95,4" transform="rotate(202.5 7 7)"/><polygon points="6.75,0.5 7.25,0.5 8.05,4 5.95,4" transform="rotate(225.0 7 7)"/><polygon points="6.75,0.5 7.25,0.5 8.05,4 5.95,4" transform="rotate(247.5 7 7)"/><polygon points="6.75,0.5 7.25,0.5 8.05,4 5.95,4" transform="rotate(270.0 7 7)"/><polygon points="6.75,0.5 7.25,0.5 8.05,4 5.95,4" transform="rotate(292.5 7 7)"/><polygon points="6.75,0.5 7.25,0.5 8.05,4 5.95,4" transform="rotate(315.0 7 7)"/><polygon points="6.75,0.5 7.25,0.5 8.05,4 5.95,4" transform="rotate(337.5 7 7)"/></g><circle cx="7" cy="7" r="3.8" fill="url(#sg)"/></svg><div class="t" style="left:847px;top:255.84px;font-size:12px;color:#333333;font-weight:400;letter-spacing:-0.320px;">2024-04-03 10:29:14.145 EDT</div><svg class="ic" width="14" height="14" viewBox="0 0 14 14" style="left:1028px;top:255px"><defs><radialGradient id="sg"><stop offset="0" stop-color="#f8d552"/><stop offset="0.7" stop-color="#f7d04c"/><stop offset="0.88" stop-color="#fce488"/><stop offset="1" stop-color="#f0b02a"/></radialGradient></defs><g fill="#eea10c"><polygon points="6.75,0.5 7.25,0.5 8.05,4 5.95,4" transform="rotate(0.0 7 7)"/><polygon points="6.75,0.5 7.25,0.5 8.05,4 5.95,4" transform="rotate(22.5 7 7)"/><polygon points="6.75,0.5 7.25,0.5 8.05,4 5.95,4" transform="rotate(45.0 7 7)"/><polygon points="6.75,0.5 7.25,0.5 8.05,4 5.95,4" transform="rotate(67.5 7 7)"/><polygon points="6.75,0.5 7.25,0.5 8.05,4 5.95,4" transform="rotate(90.0 7 7)"/><polygon points="6.75,0.5 7.25,0.5 8.05,4 5.95,4" transform="rotate(112.5 7 7)"/><polygon points="6.75,0.5 7.25,0.5 8.05,4 5.95,4" transform="rotate(135.0 7 7)"/><polygon points="6.75,0.5 7.25,0.5 8.05,4 5.95,4" transform="rotate(157.5 7 7)"/><polygon points="6.75,0.5 7.25,0.5 8.05,4 5.95,4" transform="rotate(180.0 7 7)"/><polygon points="6.75,0.5 7.25,0.5 8.05,4 5.95,4" transform="rotate(202.5 7 7)"/><polygon points="6.75,0.5 7.25,0.5 8.05,4 5.95,4" transform="rotate(225.0 7 7)"/><polygon points="6.75,0.5 7.25,0.5 8.05,4 5.95,4" transform="rotate(247.5 7 7)"/><polygon points="6.75,0.5 7.25,0.5 8.05,4 5.95,4" transform="rotate(270.0 7 7)"/><polygon points="6.75,0.5 7.25,0.5 8.05,4 5.95,4" transform="rotate(292.5 7 7)"/><polygon points="6.75,0.5 7.25,0.5 8.05,4 5.95,4" transform="rotate(315.0 7 7)"/><polygon points="6.75,0.5 7.25,0.5 8.05,4 5.95,4" transform="rotate(337.5 7 7)"/></g><circle cx="7" cy="7" r="3.8" fill="url(#sg)"/></svg><div class="t" style="left:1047px;top:255.84px;font-size:12px;color:#333333;font-weight:400;letter-spacing:-0.320px;">2024-04-03 10:29:14.145 EDT</div><svg class="ic" width="14" height="14" viewBox="0 0 14 14" style="left:1228px;top:255px"><defs><radialGradient id="sg"><stop offset="0" stop-color="#f8d552"/><stop offset="0.7" stop-color="#f7d04c"/><stop offset="0.88" stop-color="#fce488"/><stop offset="1" stop-color="#f0b02a"/></radialGradient></defs><g fill="#eea10c"><polygon points="6.75,0.5 7.25,0.5 8.05,4 5.95,4" transform="rotate(0.0 7 7)"/><polygon points="6.75,0.5 7.25,0.5 8.05,4 5.95,4" transform="rotate(22.5 7 7)"/><polygon points="6.75,0.5 7.25,0.5 8.05,4 5.95,4" transform="rotate(45.0 7 7)"/><polygon points="6.75,0.5 7.25,0.5 8.05,4 5.95,4" transform="rotate(67.5 7 7)"/><polygon points="6.75,0.5 7.25,0.5 8.05,4 5.95,4" transform="rotate(90.0 7 7)"/><polygon points="6.75,0.5 7.25,0.5 8.05,4 5.95,4" transform="rotate(112.5 7 7)"/><polygon points="6.75,0.5 7.25,0.5 8.05,4 5.95,4" transform="rotate(135.0 7 7)"/><polygon points="6.75,0.5 7.25,0.5 8.05,4 5.95,4" transform="rotate(157.5 7 7)"/><polygon points="6.75,0.5 7.25,0.5 8.05,4 5.95,4" transform="rotate(180.0 7 7)"/><polygon points="6.75,0.5 7.25,0.5 8.05,4 5.95,4" transform="rotate(202.5 7 7)"/><polygon points="6.75,0.5 7.25,0.5 8.05,4 5.95,4" transform="rotate(225.0 7 7)"/><polygon points="6.75,0.5 7.25,0.5 8.05,4 5.95,4" transform="rotate(247.5 7 7)"/><polygon points="6.75,0.5 7.25,0.5 8.05,4 5.95,4" transform="rotate(270.0 7 7)"/><polygon points="6.75,0.5 7.25,0.5 8.05,4 5.95,4" transform="rotate(292.5 7 7)"/><polygon points="6.75,0.5 7.25,0.5 8.05,4 5.95,4" transform="rotate(315.0 7 7)"/><polygon points="6.75,0.5 7.25,0.5 8.05,4 5.95,4" transform="rotate(337.5 7 7)"/></g><circle cx="7" cy="7" r="3.8" fill="url(#sg)"/></svg><div class="t" style="left:1247px;top:255.84px;font-size:12px;color:#333333;font-weight:400;letter-spacing:-0.320px;">2024-04-03 10:32:35.139 EDT</div><div style="position:absolute;left:255px;top:281px;width:1170px;height:34px;background:#ffffff"></div><div style="position:absolute;left:255px;top:281px;width:1170px;height:34px;background:#2aa6e4"></div><div style="position:absolute;left:256px;top:283px;width:1168px;height:30px;background:#5bc8fb"></div><div style="position:absolute;left:454px;top:284px;width:1px;height:29px;background:#2196d2"></div><div style="position:absolute;left:654px;top:284px;width:1px;height:29px;background:#2196d2"></div><div style="position:absolute;left:823px;top:284px;width:1px;height:29px;background:#2196d2"></div><div style="position:absolute;left:1023px;top:284px;width:1px;height:29px;background:#2196d2"></div><div style="position:absolute;left:1223px;top:284px;width:1px;height:29px;background:#2196d2"></div><div class="t" style="left:278px;top:289.84px;font-size:12px;color:#ffffff;font-weight:400;letter-spacing:-0.273px;">Seagate RSS LLC</div><div class="t" style="left:458px;top:289.84px;font-size:12px;color:#ffffff;font-weight:400;letter-spacing:-0.218px;">SRD0NF2 [Expansion Desktop Drive]</div><div class="t" style="left:658px;top:289.84px;font-size:12px;color:#ffffff;font-weight:400;letter-spacing:-0.479px;">MSFT30NAAAQQHW</div><svg class="ic" width="14" height="14" viewBox="0 0 14 14" style="left:828px;top:289px"><defs><radialGradient id="sg"><stop offset="0" stop-color="#f8d552"/><stop offset="0.7" stop-color="#f7d04c"/><stop offset="0.88" stop-color="#fce488"/><stop offset="1" stop-color="#f0b02a"/></radialGradient></defs><g fill="#eea10c"><polygon points="6.75,0.5 7.25,0.5 8.05,4 5.95,4" transform="rotate(0.0 7 7)"/><polygon points="6.75,0.5 7.25,0.5 8.05,4 5.95,4" transform="rotate(22.5 7 7)"/><polygon points="6.75,0.5 7.25,0.5 8.05,4 5.95,4" transform="rotate(45.0 7 7)"/><polygon points="6.75,0.5 7.25,0.5 8.05,4 5.95,4" transform="rotate(67.5 7 7)"/><polygon points="6.75,0.5 7.25,0.5 8.05,4 5.95,4" transform="rotate(90.0 7 7)"/><polygon points="6.75,0.5 7.25,0.5 8.05,4 5.95,4" transform="rotate(112.5 7 7)"/><polygon points="6.75,0.5 7.25,0.5 8.05,4 5.95,4" transform="rotate(135.0 7 7)"/><polygon points="6.75,0.5 7.25,0.5 8.05,4 5.95,4" transform="rotate(157.5 7 7)"/><polygon points="6.75,0.5 7.25,0.5 8.05,4 5.95,4" transform="rotate(180.0 7 7)"/><polygon points="6.75,0.5 7.25,0.5 8.05,4 5.95,4" transform="rotate(202.5 7 7)"/><polygon points="6.75,0.5 7.25,0.5 8.05,4 5.95,4" transform="rotate(225.0 7 7)"/><polygon points="6.75,0.5 7.25,0.5 8.05,4 5.95,4" transform="rotate(247.5 7 7)"/><polygon points="6.75,0.5 7.25,0.5 8.05,4 5.95,4" transform="rotate(270.0 7 7)"/><polygon points="6.75,0.5 7.25,0.5 8.05,4 5.95,4" transform="rotate(292.5 7 7)"/><polygon points="6.75,0.5 7.25,0.5 8.05,4 5.95,4" transform="rotate(315.0 7 7)"/><polygon points="6.75,0.5 7.25,0.5 8.05,4 5.95,4" transform="rotate(337.5 7 7)"/></g><circle cx="7" cy="7" r="3.8" fill="url(#sg)"/></svg><div class="t" style="left:847px;top:289.84px;font-size:12px;color:#ffffff;font-weight:400;letter-spacing:-0.320px;">2022-06-01 14:21:06.928 EDT</div><svg class="ic" width="14" height="14" viewBox="0 0 14 14" style="left:1028px;top:289px"><defs><radialGradient id="sg"><stop offset="0" stop-color="#f8d552"/><stop offset="0.7" stop-color="#f7d04c"/><stop offset="0.88" stop-color="#fce488"/><stop offset="1" stop-color="#f0b02a"/></radialGradient></defs><g fill="#eea10c"><polygon points="6.75,0.5 7.25,0.5 8.05,4 5.95,4" transform="rotate(0.0 7 7)"/><polygon points="6.75,0.5 7.25,0.5 8.05,4 5.95,4" transform="rotate(22.5 7 7)"/><polygon points="6.75,0.5 7.25,0.5 8.05,4 5.95,4" transform="rotate(45.0 7 7)"/><polygon points="6.75,0.5 7.25,0.5 8.05,4 5.95,4" transform="rotate(67.5 7 7)"/><polygon points="6.75,0.5 7.25,0.5 8.05,4 5.95,4" transform="rotate(90.0 7 7)"/><polygon points="6.75,0.5 7.25,0.5 8.05,4 5.95,4" transform="rotate(112.5 7 7)"/><polygon points="6.75,0.5 7.25,0.5 8.05,4 5.95,4" transform="rotate(135.0 7 7)"/><polygon points="6.75,0.5 7.25,0.5 8.05,4 5.95,4" transform="rotate(157.5 7 7)"/><polygon points="6.75,0.5 7.25,0.5 8.05,4 5.95,4" transform="rotate(180.0 7 7)"/><polygon points="6.75,0.5 7.25,0.5 8.05,4 5.95,4" transform="rotate(202.5 7 7)"/><polygon points="6.75,0.5 7.25,0.5 8.05,4 5.95,4" transform="rotate(225.0 7 7)"/><polygon points="6.75,0.5 7.25,0.5 8.05,4 5.95,4" transform="rotate(247.5 7 7)"/><polygon points="6.75,0.5 7.25,0.5 8.05,4 5.95,4" transform="rotate(270.0 7 7)"/><polygon points="6.75,0.5 7.25,0.5 8.05,4 5.95,4" transform="rotate(292.5 7 7)"/><polygon points="6.75,0.5 7.25,0.5 8.05,4 5.95,4" transform="rotate(315.0 7 7)"/><polygon points="6.75,0.5 7.25,0.5 8.05,4 5.95,4" transform="rotate(337.5 7 7)"/></g><circle cx="7" cy="7" r="3.8" fill="url(#sg)"/></svg><div class="t" style="left:1047px;top:289.84px;font-size:12px;color:#ffffff;font-weight:400;letter-spacing:-0.320px;">2022-06-01 14:21:06.928 EDT</div><div class="t" style="left:1227px;top:289.84px;font-size:12px;color:#ffffff;font-weight:400;letter-spacing:-0.071px;">Unknown</div><div style="position:absolute;left:255px;top:315px;width:1170px;height:34px;background:#fdf9fd"></div><div style="position:absolute;left:255px;top:348px;width:1170px;height:1px;background:#ebe9eb"></div><div style="position:absolute;left:454px;top:317px;width:1px;height:30px;background:#e9e7e9"></div><div style="position:absolute;left:654px;top:317px;width:1px;height:30px;background:#e9e7e9"></div><div style="position:absolute;left:823px;top:317px;width:1px;height:30px;background:#e9e7e9"></div><div style="position:absolute;left:1023px;top:317px;width:1px;height:30px;background:#e9e7e9"></div><div style="position:absolute;left:1223px;top:317px;width:1px;height:30px;background:#e9e7e9"></div><div style="position:absolute;left:1423px;top:317px;width:1px;height:30px;background:#e9e7e9"></div><div class="t" style="left:278px;top:323.84px;font-size:12px;color:#333333;font-weight:400;letter-spacing:-0.118px;">Intel Corp.</div><div class="t" style="left:458px;top:323.84px;font-size:12px;color:#333333;font-weight:400;letter-spacing:-0.271px;">Unknown: PID 9CB1</div><div class="t" style="left:658px;top:323.84px;font-size:12px;color:#333333;font-weight:400;letter-spacing:-0.042px;">4&amp;2dec54a9&amp;0</div><svg class="ic" width="14" height="14" viewBox="0 0 14 14" style="left:828px;top:323px"><defs><radialGradient id="sg"><stop offset="0" stop-color="#f8d552"/><stop offset="0.7" stop-color="#f7d04c"/><stop offset="0.88" stop-color="#fce488"/><stop offset="1" stop-color="#f0b02a"/></radialGradient></defs><g fill="#eea10c"><polygon points="6.75,0.5 7.25,0.5 8.05,4 5.95,4" transform="rotate(0.0 7 7)"/><polygon points="6.75,0.5 7.25,0.5 8.05,4 5.95,4" transform="rotate(22.5 7 7)"/><polygon points="6.75,0.5 7.25,0.5 8.05,4 5.95,4" transform="rotate(45.0 7 7)"/><polygon points="6.75,0.5 7.25,0.5 8.05,4 5.95,4" transform="rotate(67.5 7 7)"/><polygon points="6.75,0.5 7.25,0.5 8.05,4 5.95,4" transform="rotate(90.0 7 7)"/><polygon points="6.75,0.5 7.25,0.5 8.05,4 5.95,4" transform="rotate(112.5 7 7)"/><polygon points="6.75,0.5 7.25,0.5 8.05,4 5.95,4" transform="rotate(135.0 7 7)"/><polygon points="6.75,0.5 7.25,0.5 8.05,4 5.95,4" transform="rotate(157.5 7 7)"/><polygon points="6.75,0.5 7.25,0.5 8.05,4 5.95,4" transform="rotate(180.0 7 7)"/><polygon points="6.75,0.5 7.25,0.5 8.05,4 5.95,4" transform="rotate(202.5 7 7)"/><polygon points="6.75,0.5 7.25,0.5 8.05,4 5.95,4" transform="rotate(225.0 7 7)"/><polygon points="6.75,0.5 7.25,0.5 8.05,4 5.95,4" transform="rotate(247.5 7 7)"/><polygon points="6.75,0.5 7.25,0.5 8.05,4 5.95,4" transform="rotate(270.0 7 7)"/><polygon points="6.75,0.5 7.25,0.5 8.05,4 5.95,4" transform="rotate(292.5 7 7)"/><polygon points="6.75,0.5 7.25,0.5 8.05,4 5.95,4" transform="rotate(315.0 7 7)"/><polygon points="6.75,0.5 7.25,0.5 8.05,4 5.95,4" transform="rotate(337.5 7 7)"/></g><circle cx="7" cy="7" r="3.8" fill="url(#sg)"/></svg><div class="t" style="left:847px;top:323.84px;font-size:12px;color:#333333;font-weight:400;letter-spacing:-0.320px;">2021-01-29 12:36:18.210 EST</div><svg class="ic" width="14" height="14" viewBox="0 0 14 14" style="left:1028px;top:323px"><defs><radialGradient id="sg"><stop offset="0" stop-color="#f8d552"/><stop offset="0.7" stop-color="#f7d04c"/><stop offset="0.88" stop-color="#fce488"/><stop offset="1" stop-color="#f0b02a"/></radialGradient></defs><g fill="#eea10c"><polygon points="6.75,0.5 7.25,0.5 8.05,4 5.95,4" transform="rotate(0.0 7 7)"/><polygon points="6.75,0.5 7.25,0.5 8.05,4 5.95,4" transform="rotate(22.5 7 7)"/><polygon points="6.75,0.5 7.25,0.5 8.05,4 5.95,4" transform="rotate(45.0 7 7)"/><polygon points="6.75,0.5 7.25,0.5 8.05,4 5.95,4" transform="rotate(67.5 7 7)"/><polygon points="6.75,0.5 7.25,0.5 8.05,4 5.95,4" transform="rotate(90.0 7 7)"/><polygon points="6.75,0.5 7.25,0.5 8.05,4 5.95,4" transform="rotate(112.5 7 7)"/><polygon points="6.75,0.5 7.25,0.5 8.05,4 5.95,4" transform="rotate(135.0 7 7)"/><polygon points="6.75,0.5 7.25,0.5 8.05,4 5.95,4" transform="rotate(157.5 7 7)"/><polygon points="6.75,0.5 7.25,0.5 8.05,4 5.95,4" transform="rotate(180.0 7 7)"/><polygon points="6.75,0.5 7.25,0.5 8.05,4 5.95,4" transform="rotate(202.5 7 7)"/><polygon points="6.75,0.5 7.25,0.5 8.05,4 5.95,4" transform="rotate(225.0 7 7)"/><polygon points="6.75,0.5 7.25,0.5 8.05,4 5.95,4" transform="rotate(247.5 7 7)"/><polygon points="6.75,0.5 7.25,0.5 8.05,4 5.95,4" transform="rotate(270.0 7 7)"/><polygon points="6.75,0.5 7.25,0.5 8.05,4 5.95,4" transform="rotate(292.5 7 7)"/><polygon points="6.75,0.5 7.25,0.5 8.05,4 5.95,4" transform="rotate(315.0 7 7)"/><polygon points="6.75,0.5 7.25,0.5 8.05,4 5.95,4" transform="rotate(337.5 7 7)"/></g><circle cx="7" cy="7" r="3.8" fill="url(#sg)"/></svg><div class="t" style="left:1047px;top:323.84px;font-size:12px;color:#333333;font-weight:400;letter-spacing:-0.320px;">2021-01-29 12:36:18.210 EST</div><div class="t" style="left:1227px;top:323.84px;font-size:12px;color:#333333;font-weight:400;letter-spacing:-0.071px;">Unknown</div><div style="position:absolute;left:255px;top:349px;width:1170px;height:34px;background:#ffffff"></div><div style="position:absolute;left:255px;top:382px;width:1170px;height:1px;background:#ebe9eb"></div><div style="position:absolute;left:454px;top:351px;width:1px;height:30px;background:#e9e7e9"></div><div style="position:absolute;left:654px;top:351px;width:1px;height:30px;background:#e9e7e9"></div><div style="position:absolute;left:823px;top:351px;width:1px;height:30px;background:#e9e7e9"></div><div style="position:absolute;left:1023px;top:351px;width:1px;height:30px;background:#e9e7e9"></div><div style="position:absolute;left:1223px;top:351px;width:1px;height:30px;background:#e9e7e9"></div><div style="position:absolute;left:1423px;top:351px;width:1px;height:30px;background:#e9e7e9"></div><div class="t" style="left:278px;top:357.84px;font-size:12px;color:#333333;font-weight:400;letter-spacing:-0.118px;">Intel Corp.</div><div class="t" style="left:458px;top:357.84px;font-size:12px;color:#333333;font-weight:400;letter-spacing:-0.039px;">Bluetooth wireless interface</div><div class="t" style="left:658px;top:357.84px;font-size:12px;color:#333333;font-weight:400;letter-spacing:-0.071px;">5&amp;2cb2f022&amp;0</div><svg class="ic" width="14" height="14" viewBox="0 0 14 14" style="left:828px;top:357px"><defs><radialGradient id="sg"><stop offset="0" stop-color="#f8d552"/><stop offset="0.7" stop-color="#f7d04c"/><stop offset="0.88" stop-color="#fce488"/><stop offset="1" stop-color="#f0b02a"/></radialGradient></defs><g fill="#eea10c"><polygon points="6.75,0.5 7.25,0.5 8.05,4 5.95,4" transform="rotate(0.0 7 7)"/><polygon points="6.75,0.5 7.25,0.5 8.05,4 5.95,4" transform="rotate(22.5 7 7)"/><polygon points="6.75,0.5 7.25,0.5 8.05,4 5.95,4" transform="rotate(45.0 7 7)"/><polygon points="6.75,0.5 7.25,0.5 8.05,4 5.95,4" transform="rotate(67.5 7 7)"/><polygon points="6.75,0.5 7.25,0.5 8.05,4 5.95,4" transform="rotate(90.0 7 7)"/><polygon points="6.75,0.5 7.25,0.5 8.05,4 5.95,4" transform="rotate(112.5 7 7)"/><polygon points="6.75,0.5 7.25,0.5 8.05,4 5.95,4" transform="rotate(135.0 7 7)"/><polygon points="6.75,0.5 7.25,0.5 8.05,4 5.95,4" transform="rotate(157.5 7 7)"/><polygon points="6.75,0.5 7.25,0.5 8.05,4 5.95,4" transform="rotate(180.0 7 7)"/><polygon points="6.75,0.5 7.25,0.5 8.05,4 5.95,4" transform="rotate(202.5 7 7)"/><polygon points="6.75,0.5 7.25,0.5 8.05,4 5.95,4" transform="rotate(225.0 7 7)"/><polygon points="6.75,0.5 7.25,0.5 8.05,4 5.95,4" transform="rotate(247.5 7 7)"/><polygon points="6.75,0.5 7.25,0.5 8.05,4 5.95,4" transform="rotate(270.0 7 7)"/><polygon points="6.75,0.5 7.25,0.5 8.05,4 5.95,4" transform="rotate(292.5 7 7)"/><polygon points="6.75,0.5 7.25,0.5 8.05,4 5.95,4" transform="rotate(315.0 7 7)"/><polygon points="6.75,0.5 7.25,0.5 8.05,4 5.95,4" transform="rotate(337.5 7 7)"/></g><circle cx="7" cy="7" r="3.8" fill="url(#sg)"/></svg><div class="t" style="left:847px;top:357.84px;font-size:12px;color:#333333;font-weight:400;letter-spacing:-0.320px;">2022-05-13 13:42:19.007 EDT</div><svg class="ic" width="14" height="14" viewBox="0 0 14 14" style="left:1028px;top:357px"><defs><radialGradient id="sg"><stop offset="0" stop-color="#f8d552"/><stop offset="0.7" stop-color="#f7d04c"/><stop offset="0.88" stop-color="#fce488"/><stop offset="1" stop-color="#f0b02a"/></radialGradient></defs><g fill="#eea10c"><polygon points="6.75,0.5 7.25,0.5 8.05,4 5.95,4" transform="rotate(0.0 7 7)"/><polygon points="6.75,0.5 7.25,0.5 8.05,4 5.95,4" transform="rotate(22.5 7 7)"/><polygon points="6.75,0.5 7.25,0.5 8.05,4 5.95,4" transform="rotate(45.0 7 7)"/><polygon points="6.75,0.5 7.25,0.5 8.05,4 5.95,4" transform="rotate(67.5 7 7)"/><polygon points="6.75,0.5 7.25,0.5 8.05,4 5.95,4" transform="rotate(90.0 7 7)"/><polygon points="6.75,0.5 7.25,0.5 8.05,4 5.95,4" transform="rotate(112.5 7 7)"/><polygon points="6.75,0.5 7.25,0.5 8.05,4 5.95,4" transform="rotate(135.0 7 7)"/><polygon points="6.75,0.5 7.25,0.5 8.05,4 5.95,4" transform="rotate(157.5 7 7)"/><polygon points="6.75,0.5 7.25,0.5 8.05,4 5.95,4" transform="rotate(180.0 7 7)"/><polygon points="6.75,0.5 7.25,0.5 8.05,4 5.95,4" transform="rotate(202.5 7 7)"/><polygon points="6.75,0.5 7.25,0.5 8.05,4 5.95,4" transform="rotate(225.0 7 7)"/><polygon points="6.75,0.5 7.25,0.5 8.05,4 5.95,4" transform="rotate(247.5 7 7)"/><polygon points="6.75,0.5 7.25,0.5 8.05,4 5.95,4" transform="rotate(270.0 7 7)"/><polygon points="6.75,0.5 7.25,0.5 8.05,4 5.95,4" transform="rotate(292.5 7 7)"/><polygon points="6.75,0.5 7.25,0.5 8.05,4 5.95,4" transform="rotate(315.0 7 7)"/><polygon points="6.75,0.5 7.25,0.5 8.05,4 5.95,4" transform="rotate(337.5 7 7)"/></g><circle cx="7" cy="7" r="3.8" fill="url(#sg)"/></svg><div class="t" style="left:1047px;top:357.84px;font-size:12px;color:#333333;font-weight:400;letter-spacing:-0.320px;">2021-01-29 12:36:59.120 EST</div><div class="t" style="left:1227px;top:357.84px;font-size:12px;color:#333333;font-weight:400;letter-spacing:-0.071px;">Unknown</div><div style="position:absolute;left:255px;top:383px;width:1170px;height:34px;background:#fdf9fd"></div><div style="position:absolute;left:255px;top:416px;width:1170px;height:1px;background:#ebe9eb"></div><div style="position:absolute;left:454px;top:385px;width:1px;height:30px;background:#e9e7e9"></div><div style="position:absolute;left:654px;top:385px;width:1px;height:30px;background:#e9e7e9"></div><div style="position:absolute;left:823px;top:385px;width:1px;height:30px;background:#e9e7e9"></div><div style="position:absolute;left:1023px;top:385px;width:1px;height:30px;background:#e9e7e9"></div><div style="position:absolute;left:1223px;top:385px;width:1px;height:30px;background:#e9e7e9"></div><div style="position:absolute;left:1423px;top:385px;width:1px;height:30px;background:#e9e7e9"></div><div class="t" style="left:278px;top:391.84px;font-size:12px;color:#333333;font-weight:400;letter-spacing:-0.118px;">Intel Corp.</div><div class="t" style="left:458px;top:391.84px;font-size:12px;color:#333333;font-weight:400;letter-spacing:-0.093px;">Integrated Hub</div><div class="t" style="left:658px;top:391.84px;font-size:12px;color:#333333;font-weight:400;letter-spacing:-0.129px;">5&amp;37f67426&amp;0</div><svg class="ic" width="14" height="14" viewBox="0 0 14 14" style="left:828px;top:391px"><defs><radialGradient id="sg"><stop offset="0" stop-color="#f8d552"/><stop offset="0.7" stop-color="#f7d04c"/><stop offset="0.88" stop-color="#fce488"/><stop offset="1" stop-color="#f0b02a"/></radialGradient></defs><g fill="#eea10c"><polygon points="6.75,0.5 7.25,0.5 8.05,4 5.95,4" transform="rotate(0.0 7 7)"/><polygon points="6.75,0.5 7.25,0.5 8.05,4 5.95,4" transform="rotate(22.5 7 7)"/><polygon points="6.75,0.5 7.25,0.5 8.05,4 5.95,4" transform="rotate(45.0 7 7)"/><polygon points="6.75,0.5 7.25,0.5 8.05,4 5.95,4" transform="rotate(67.5 7 7)"/><polygon points="6.75,0.5 7.25,0.5 8.05,4 5.95,4" transform="rotate(90.0 7 7)"/><polygon points="6.75,0.5 7.25,0.5 8.05,4 5.95,4" transform="rotate(112.5 7 7)"/><polygon points="6.75,0.5 7.25,0.5 8.05,4 5.95,4" transform="rotate(135.0 7 7)"/><polygon points="6.75,0.5 7.25,0.5 8.05,4 5.95,4" transform="rotate(157.5 7 7)"/><polygon points="6.75,0.5 7.25,0.5 8.05,4 5.95,4" transform="rotate(180.0 7 7)"/><polygon points="6.75,0.5 7.25,0.5 8.05,4 5.95,4" transform="rotate(202.5 7 7)"/><polygon points="6.75,0.5 7.25,0.5 8.05,4 5.95,4" transform="rotate(225.0 7 7)"/><polygon points="6.75,0.5 7.25,0.5 8.05,4 5.95,4" transform="rotate(247.5 7 7)"/><polygon points="6.75,0.5 7.25,0.5 8.05,4 5.95,4" transform="rotate(270.0 7 7)"/><polygon points="6.75,0.5 7.25,0.5 8.05,4 5.95,4" transform="rotate(292.5 7 7)"/><polygon points="6.75,0.5 7.25,0.5 8.05,4 5.95,4" transform="rotate(315.0 7 7)"/><polygon points="6.75,0.5 7.25,0.5 8.05,4 5.95,4" transform="rotate(337.5 7 7)"/></g><circle cx="7" cy="7" r="3.8" fill="url(#sg)"/></svg><div class="t" style="left:847px;top:391.84px;font-size:12px;color:#333333;font-weight:400;letter-spacing:-0.320px;">2021-01-29 12:36:19.301 EST</div><svg class="ic" width="14" height="14" viewBox="0 0 14 14" style="left:1028px;top:391px"><defs><radialGradient id="sg"><stop offset="0" stop-color="#f8d552"/><stop offset="0.7" stop-color="#f7d04c"/><stop offset="0.88" stop-color="#fce488"/><stop offset="1" stop-color="#f0b02a"/></radialGradient></defs><g fill="#eea10c"><polygon points="6.75,0.5 7.25,0.5 8.05,4 5.95,4" transform="rotate(0.0 7 7)"/><polygon points="6.75,0.5 7.25,0.5 8.05,4 5.95,4" transform="rotate(22.5 7 7)"/><polygon points="6.75,0.5 7.25,0.5 8.05,4 5.95,4" transform="rotate(45.0 7 7)"/><polygon points="6.75,0.5 7.25,0.5 8.05,4 5.95,4" transform="rotate(67.5 7 7)"/><polygon points="6.75,0.5 7.25,0.5 8.05,4 5.95,4" transform="rotate(90.0 7 7)"/><polygon points="6.75,0.5 7.25,0.5 8.05,4 5.95,4" transform="rotate(112.5 7 7)"/><polygon points="6.75,0.5 7.25,0.5 8.05,4 5.95,4" transform="rotate(135.0 7 7)"/><polygon points="6.75,0.5 7.25,0.5 8.05,4 5.95,4" transform="rotate(157.5 7 7)"/><polygon points="6.75,0.5 7.25,0.5 8.05,4 5.95,4" transform="rotate(180.0 7 7)"/><polygon points="6.75,0.5 7.25,0.5 8.05,4 5.95,4" transform="rotate(202.5 7 7)"/><polygon points="6.75,0.5 7.25,0.5 8.05,4 5.95,4" transform="rotate(225.0 7 7)"/><polygon points="6.75,0.5 7.25,0.5 8.05,4 5.95,4" transform="rotate(247.5 7 7)"/><polygon points="6.75,0.5 7.25,0.5 8.05,4 5.95,4" transform="rotate(270.0 7 7)"/><polygon points="6.75,0.5 7.25,0.5 8.05,4 5.95,4" transform="rotate(292.5 7 7)"/><polygon points="6.75,0.5 7.25,0.5 8.05,4 5.95,4" transform="rotate(315.0 7 7)"/><polygon points="6.75,0.5 7.25,0.5 8.05,4 5.95,4" transform="rotate(337.5 7 7)"/></g><circle cx="7" cy="7" r="3.8" fill="url(#sg)"/></svg><div class="t" style="left:1047px;top:391.84px;font-size:12px;color:#333333;font-weight:400;letter-spacing:-0.320px;">2021-01-29 12:36:19.301 EST</div><div class="t" style="left:1227px;top:391.84px;font-size:12px;color:#333333;font-weight:400;letter-spacing:-0.071px;">Unknown</div><div style="position:absolute;left:255px;top:417px;width:1170px;height:34px;background:#ffffff"></div><div style="position:absolute;left:255px;top:450px;width:1170px;height:1px;background:#ebe9eb"></div><div style="position:absolute;left:454px;top:419px;width:1px;height:30px;background:#e9e7e9"></div><div style="position:absolute;left:654px;top:419px;width:1px;height:30px;background:#e9e7e9"></div><div style="position:absolute;left:823px;top:419px;width:1px;height:30px;background:#e9e7e9"></div><div style="position:absolute;left:1023px;top:419px;width:1px;height:30px;background:#e9e7e9"></div><div style="position:absolute;left:1223px;top:419px;width:1px;height:30px;background:#e9e7e9"></div><div style="position:absolute;left:1423px;top:419px;width:1px;height:30px;background:#e9e7e9"></div><div class="t" style="left:278px;top:425.84px;font-size:12px;color:#333333;font-weight:400;letter-spacing:0.000px;"></div><div class="t" style="left:458px;top:425.84px;font-size:12px;color:#333333;font-weight:400;letter-spacing:0.000px;"></div><div class="t" style="left:658px;top:425.84px;font-size:12px;color:#333333;font-weight:400;letter-spacing:-0.075px;">4&amp;e355ae</div><svg class="ic" width="14" height="14" viewBox="0 0 14 14" style="left:828px;top:425px"><defs><radialGradient id="sg"><stop offset="0" stop-color="#f8d552"/><stop offset="0.7" stop-color="#f7d04c"/><stop offset="0.88" stop-color="#fce488"/><stop offset="1" stop-color="#f0b02a"/></radialGradient></defs><g fill="#eea10c"><polygon points="6.75,0.5 7.25,0.5 8.05,4 5.95,4" transform="rotate(0.0 7 7)"/><polygon points="6.75,0.5 7.25,0.5 8.05,4 5.95,4" transform="rotate(22.5 7 7)"/><polygon points="6.75,0.5 7.25,0.5 8.05,4 5.95,4" transform="rotate(45.0 7 7)"/><polygon points="6.75,0.5 7.25,0.5 8.05,4 5.95,4" transform="rotate(67.5 7 7)"/><polygon points="6.75,0.5 7.25,0.5 8.05,4 5.95,4" transform="rotate(90.0 7 7)"/><polygon points="6.75,0.5 7.25,0.5 8.05,4 5.95,4" transform="rotate(112.5 7 7)"/><polygon points="6.75,0.5 7.25,0.5 8.05,4 5.95,4" transform="rotate(135.0 7 7)"/><polygon points="6.75,0.5 7.25,0.5 8.05,4 5.95,4" transform="rotate(157.5 7 7)"/><polygon points="6.75,0.5 7.25,0.5 8.05,4 5.95,4" transform="rotate(180.0 7 7)"/><polygon points="6.75,0.5 7.25,0.5 8.05,4 5.95,4" transform="rotate(202.5 7 7)"/><polygon points="6.75,0.5 7.25,0.5 8.05,4 5.95,4" transform="rotate(225.0 7 7)"/><polygon points="6.75,0.5 7.25,0.5 8.05,4 5.95,4" transform="rotate(247.5 7 7)"/><polygon points="6.75,0.5 7.25,0.5 8.05,4 5.95,4" transform="rotate(270.0 7 7)"/><polygon points="6.75,0.5 7.25,0.5 8.05,4 5.95,4" transform="rotate(292.5 7 7)"/><polygon points="6.75,0.5 7.25,0.5 8.05,4 5.95,4" transform="rotate(315.0 7 7)"/><polygon points="6.75,0.5 7.25,0.5 8.05,4 5.95,4" transform="rotate(337.5 7 7)"/></g><circle cx="7" cy="7" r="3.8" fill="url(#sg)"/></svg><div class="t" style="left:847px;top:425.84px;font-size:12px;color:#333333;font-weight:400;letter-spacing:-0.320px;">2021-01-29 12:36:18.116 EST</div><svg class="ic" width="14" height="14" viewBox="0 0 14 14" style="left:1028px;top:425px"><defs><radialGradient id="sg"><stop offset="0" stop-color="#f8d552"/><stop offset="0.7" stop-color="#f7d04c"/><stop offset="0.88" stop-color="#fce488"/><stop offset="1" stop-color="#f0b02a"/></radialGradient></defs><g fill="#eea10c"><polygon points="6.75,0.5 7.25,0.5 8.05,4 5.95,4" transform="rotate(0.0 7 7)"/><polygon points="6.75,0.5 7.25,0.5 8.05,4 5.95,4" transform="rotate(22.5 7 7)"/><polygon points="6.75,0.5 7.25,0.5 8.05,4 5.95,4" transform="rotate(45.0 7 7)"/><polygon points="6.75,0.5 7.25,0.5 8.05,4 5.95,4" transform="rotate(67.5 7 7)"/><polygon points="6.75,0.5 7.25,0.5 8.05,4 5.95,4" transform="rotate(90.0 7 7)"/><polygon points="6.75,0.5 7.25,0.5 8.05,4 5.95,4" transform="rotate(112.5 7 7)"/><polygon points="6.75,0.5 7.25,0.5 8.05,4 5.95,4" transform="rotate(135.0 7 7)"/><polygon points="6.75,0.5 7.25,0.5 8.05,4 5.95,4" transform="rotate(157.5 7 7)"/><polygon points="6.75,0.5 7.25,0.5 8.05,4 5.95,4" transform="rotate(180.0 7 7)"/><polygon points="6.75,0.5 7.25,0.5 8.05,4 5.95,4" transform="rotate(202.5 7 7)"/><polygon points="6.75,0.5 7.25,0.5 8.05,4 5.95,4" transform="rotate(225.0 7 7)"/><polygon points="6.75,0.5 7.25,0.5 8.05,4 5.95,4" transform="rotate(247.5 7 7)"/><polygon points="6.75,0.5 7.25,0.5 8.05,4 5.95,4" transform="rotate(270.0 7 7)"/><polygon points="6.75,0.5 7.25,0.5 8.05,4 5.95,4" transform="rotate(292.5 7 7)"/><polygon points="6.75,0.5 7.25,0.5 8.05,4 5.95,4" transform="rotate(315.0 7 7)"/><polygon points="6.75,0.5 7.25,0.5 8.05,4 5.95,4" transform="rotate(337.5 7 7)"/></g><circle cx="7" cy="7" r="3.8" fill="url(#sg)"/></svg><div class="t" style="left:1047px;top:425.84px;font-size:12px;color:#333333;font-weight:400;letter-spacing:-0.320px;">2021-01-29 12:36:18.116 EST</div><div class="t" style="left:1227px;top:425.84px;font-size:12px;color:#333333;font-weight:400;letter-spacing:-0.071px;">Unknown</div><div style="position:absolute;left:255px;top:451px;width:1170px;height:34px;background:#fdf9fd"></div><div style="position:absolute;left:255px;top:484px;width:1170px;height:1px;background:#ebe9eb"></div><div style="position:absolute;left:454px;top:453px;width:1px;height:30px;background:#e9e7e9"></div><div style="position:absolute;left:654px;top:453px;width:1px;height:30px;background:#e9e7e9"></div><div style="position:absolute;left:823px;top:453px;width:1px;height:30px;background:#e9e7e9"></div><div style="position:absolute;left:1023px;top:453px;width:1px;height:30px;background:#e9e7e9"></div><div style="position:absolute;left:1223px;top:453px;width:1px;height:30px;background:#e9e7e9"></div><div style="position:absolute;left:1423px;top:453px;width:1px;height:30px;background:#e9e7e9"></div><div class="t" style="left:278px;top:459.84px;font-size:12px;color:#333333;font-weight:400;letter-spacing:-0.093px;">Logitech, Inc.</div><div class="t" style="left:458px;top:459.84px;font-size:12px;color:#333333;font-weight:400;letter-spacing:-0.129px;">TrackMan Wheel</div><div class="t" style="left:658px;top:459.84px;font-size:12px;color:#333333;font-weight:400;letter-spacing:-0.071px;">5&amp;2cb2f022&amp;0</div><svg class="ic" width="14" height="14" viewBox="0 0 14 14" style="left:828px;top:459px"><defs><radialGradient id="sg"><stop offset="0" stop-color="#f8d552"/><stop offset="0.7" stop-color="#f7d04c"/><stop offset="0.88" stop-color="#fce488"/><stop offset="1" stop-color="#f0b02a"/></radialGradient></defs><g fill="#eea10c"><polygon points="6.75,0.5 7.25,0.5 8.05,4 5.95,4" transform="rotate(0.0 7 7)"/><polygon points="6.75,0.5 7.25,0.5 8.05,4 5.95,4" transform="rotate(22.5 7 7)"/><polygon points="6.75,0.5 7.25,0.5 8.05,4 5.95,4" transform="rotate(45.0 7 7)"/><polygon points="6.75,0.5 7.25,0.5 8.05,4 5.95,4" transform="rotate(67.5 7 7)"/><polygon points="6.75,0.5 7.25,0.5 8.05,4 5.95,4" transform="rotate(90.0 7 7)"/><polygon points="6.75,0.5 7.25,0.5 8.05,4 5.95,4" transform="rotate(112.5 7 7)"/><polygon points="6.75,0.5 7.25,0.5 8.05,4 5.95,4" transform="rotate(135.0 7 7)"/><polygon points="6.75,0.5 7.25,0.5 8.05,4 5.95,4" transform="rotate(157.5 7 7)"/><polygon points="6.75,0.5 7.25,0.5 8.05,4 5.95,4" transform="rotate(180.0 7 7)"/><polygon points="6.75,0.5 7.25,0.5 8.05,4 5.95,4" transform="rotate(202.5 7 7)"/><polygon points="6.75,0.5 7.25,0.5 8.05,4 5.95,4" transform="rotate(225.0 7 7)"/><polygon points="6.75,0.5 7.25,0.5 8.05,4 5.95,4" transform="rotate(247.5 7 7)"/><polygon points="6.75,0.5 7.25,0.5 8.05,4 5.95,4" transform="rotate(270.0 7 7)"/><polygon points="6.75,0.5 7.25,0.5 8.05,4 5.95,4" transform="rotate(292.5 7 7)"/><polygon points="6.75,0.5 7.25,0.5 8.05,4 5.95,4" transform="rotate(315.0 7 7)"/><polygon points="6.75,0.5 7.25,0.5 8.05,4 5.95,4" transform="rotate(337.5 7 7)"/></g><circle cx="7" cy="7" r="3.8" fill="url(#sg)"/></svg><div class="t" style="left:847px;top:459.84px;font-size:12px;color:#333333;font-weight:400;letter-spacing:-0.320px;">2023-01-13 14:54:29.583 EST</div><svg class="ic" width="14" height="14" viewBox="0 0 14 14" style="left:1028px;top:459px"><defs><radialGradient id="sg"><stop offset="0" stop-color="#f8d552"/><stop offset="0.7" stop-color="#f7d04c"/><stop offset="0.88" stop-color="#fce488"/><stop offset="1" stop-color="#f0b02a"/></radialGradient></defs><g fill="#eea10c"><polygon points="6.75,0.5 7.25,0.5 8.05,4 5.95,4" transform="rotate(0.0 7 7)"/><polygon points="6.75,0.5 7.25,0.5 8.05,4 5.95,4" transform="rotate(22.5 7 7)"/><polygon points="6.75,0.5 7.25,0.5 8.05,4 5.95,4" transform="rotate(45.0 7 7)"/><polygon points="6.75,0.5 7.25,0.5 8.05,4 5.95,4" transform="rotate(67.5 7 7)"/><polygon points="6.75,0.5 7.25,0.5 8.05,4 5.95,4" transform="rotate(90.0 7 7)"/><polygon points="6.75,0.5 7.25,0.5 8.05,4 5.95,4" transform="rotate(112.5 7 7)"/><polygon points="6.75,0.5 7.25,0.5 8.05,4 5.95,4" transform="rotate(135.0 7 7)"/><polygon points="6.75,0.5 7.25,0.5 8.05,4 5.95,4" transform="rotate(157.5 7 7)"/><polygon points="6.75,0.5 7.25,0.5 8.05,4 5.95,4" transform="rotate(180.0 7 7)"/><polygon points="6.75,0.5 7.25,0.5 8.05,4 5.95,4" transform="rotate(202.5 7 7)"/><polygon points="6.75,0.5 7.25,0.5 8.05,4 5.95,4" transform="rotate(225.0 7 7)"/><polygon points="6.75,0.5 7.25,0.5 8.05,4 5.95,4" transform="rotate(247.5 7 7)"/><polygon points="6.75,0.5 7.25,0.5 8.05,4 5.95,4" transform="rotate(270.0 7 7)"/><polygon points="6.75,0.5 7.25,0.5 8.05,4 5.95,4" transform="rotate(292.5 7 7)"/><polygon points="6.75,0.5 7.25,0.5 8.05,4 5.95,4" transform="rotate(315.0 7 7)"/><polygon points="6.75,0.5 7.25,0.5 8.05,4 5.95,4" transform="rotate(337.5 7 7)"/></g><circle cx="7" cy="7" r="3.8" fill="url(#sg)"/></svg><div class="t" style="left:1047px;top:459.84px;font-size:12px;color:#333333;font-weight:400;letter-spacing:-0.320px;">2023-01-13 14:54:29.583 EST</div><div class="t" style="left:1227px;top:459.84px;font-size:12px;color:#333333;font-weight:400;letter-spacing:-0.071px;">Unknown</div><div style="position:absolute;left:255px;top:485px;width:1170px;height:25px;background:#ffffff"></div><div style="position:absolute;left:454px;top:487px;width:1px;height:21px;background:#e9e7e9"></div><div style="position:absolute;left:654px;top:487px;width:1px;height:21px;background:#e9e7e9"></div><div style="position:absolute;left:823px;top:487px;width:1px;height:21px;background:#e9e7e9"></div><div style="position:absolute;left:1023px;top:487px;width:1px;height:21px;background:#e9e7e9"></div><div style="position:absolute;left:1223px;top:487px;width:1px;height:21px;background:#e9e7e9"></div><div style="position:absolute;left:1423px;top:487px;width:1px;height:21px;background:#e9e7e9"></div><div class="t" style="left:278px;top:493.84px;font-size:12px;color:#333333;font-weight:400;letter-spacing:-0.118px;">Canon, Inc.</div><div class="t" style="left:458px;top:493.84px;font-size:12px;color:#333333;font-weight:400;letter-spacing:-0.244px;">CanoScan LiDE 300</div><div class="t" style="left:658px;top:493.84px;font-size:12px;color:#333333;font-weight:400;letter-spacing:-0.375px;">5445E0</div><svg class="ic" width="14" height="14" viewBox="0 0 14 14" style="left:828px;top:493px"><defs><radialGradient id="sg"><stop offset="0" stop-color="#f8d552"/><stop offset="0.7" stop-color="#f7d04c"/><stop offset="0.88" stop-color="#fce488"/><stop offset="1" stop-color="#f0b02a"/></radialGradient></defs><g fill="#eea10c"><polygon points="6.75,0.5 7.25,0.5 8.05,4 5.95,4" transform="rotate(0.0 7 7)"/><polygon points="6.75,0.5 7.25,0.5 8.05,4 5.95,4" transform="rotate(22.5 7 7)"/><polygon points="6.75,0.5 7.25,0.5 8.05,4 5.95,4" transform="rotate(45.0 7 7)"/><polygon points="6.75,0.5 7.25,0.5 8.05,4 5.95,4" transform="rotate(67.5 7 7)"/><polygon points="6.75,0.5 7.25,0.5 8.05,4 5.95,4" transform="rotate(90.0 7 7)"/><polygon points="6.75,0.5 7.25,0.5 8.05,4 5.95,4" transform="rotate(112.5 7 7)"/><polygon points="6.75,0.5 7.25,0.5 8.05,4 5.95,4" transform="rotate(135.0 7 7)"/><polygon points="6.75,0.5 7.25,0.5 8.05,4 5.95,4" transform="rotate(157.5 7 7)"/><polygon points="6.75,0.5 7.25,0.5 8.05,4 5.95,4" transform="rotate(180.0 7 7)"/><polygon points="6.75,0.5 7.25,0.5 8.05,4 5.95,4" transform="rotate(202.5 7 7)"/><polygon points="6.75,0.5 7.25,0.5 8.05,4 5.95,4" transform="rotate(225.0 7 7)"/><polygon points="6.75,0.5 7.25,0.5 8.05,4 5.95,4" transform="rotate(247.5 7 7)"/><polygon points="6.75,0.5 7.25,0.5 8.05,4 5.95,4" transform="rotate(270.0 7 7)"/><polygon points="6.75,0.5 7.25,0.5 8.05,4 5.95,4" transform="rotate(292.5 7 7)"/><polygon points="6.75,0.5 7.25,0.5 8.05,4 5.95,4" transform="rotate(315.0 7 7)"/><polygon points="6.75,0.5 7.25,0.5 8.05,4 5.95,4" transform="rotate(337.5 7 7)"/></g><circle cx="7" cy="7" r="3.8" fill="url(#sg)"/></svg><div class="t" style="left:847px;top:493.84px;font-size:12px;color:#333333;font-weight:400;letter-spacing:-0.320px;">2023-09-09 17:10:49.196 EDT</div><svg class="ic" width="14" height="14" viewBox="0 0 14 14" style="left:1028px;top:493px"><defs><radialGradient id="sg"><stop offset="0" stop-color="#f8d552"/><stop offset="0.7" stop-color="#f7d04c"/><stop offset="0.88" stop-color="#fce488"/><stop offset="1" stop-color="#f0b02a"/></radialGradient></defs><g fill="#eea10c"><polygon points="6.75,0.5 7.25,0.5 8.05,4 5.95,4" transform="rotate(0.0 7 7)"/><polygon points="6.75,0.5 7.25,0.5 8.05,4 5.95,4" transform="rotate(22.5 7 7)"/><polygon points="6.75,0.5 7.25,0.5 8.05,4 5.95,4" transform="rotate(45.0 7 7)"/><polygon points="6.75,0.5 7.25,0.5 8.05,4 5.95,4" transform="rotate(67.5 7 7)"/><polygon points="6.75,0.5 7.25,0.5 8.05,4 5.95,4" transform="rotate(90.0 7 7)"/><polygon points="6.75,0.5 7.25,0.5 8.05,4 5.95,4" transform="rotate(112.5 7 7)"/><polygon points="6.75,0.5 7.25,0.5 8.05,4 5.95,4" transform="rotate(135.0 7 7)"/><polygon points="6.75,0.5 7.25,0.5 8.05,4 5.95,4" transform="rotate(157.5 7 7)"/><polygon points="6.75,0.5 7.25,0.5 8.05,4 5.95,4" transform="rotate(180.0 7 7)"/><polygon points="6.75,0.5 7.25,0.5 8.05,4 5.95,4" transform="rotate(202.5 7 7)"/><polygon points="6.75,0.5 7.25,0.5 8.05,4 5.95,4" transform="rotate(225.0 7 7)"/><polygon points="6.75,0.5 7.25,0.5 8.05,4 5.95,4" transform="rotate(247.5 7 7)"/><polygon points="6.75,0.5 7.25,0.5 8.05,4 5.95,4" transform="rotate(270.0 7 7)"/><polygon points="6.75,0.5 7.25,0.5 8.05,4 5.95,4" transform="rotate(292.5 7 7)"/><polygon points="6.75,0.5 7.25,0.5 8.05,4 5.95,4" transform="rotate(315.0 7 7)"/><polygon points="6.75,0.5 7.25,0.5 8.05,4 5.95,4" transform="rotate(337.5 7 7)"/></g><circle cx="7" cy="7" r="3.8" fill="url(#sg)"/></svg><div class="t" style="left:1047px;top:493.84px;font-size:12px;color:#333333;font-weight:400;letter-spacing:-0.320px;">2023-09-09 17:10:49.196 EDT</div><svg class="ic" width="14" height="14" viewBox="0 0 14 14" style="left:1228px;top:493px"><defs><radialGradient id="sg"><stop offset="0" stop-color="#f8d552"/><stop offset="0.7" stop-color="#f7d04c"/><stop offset="0.88" stop-color="#fce488"/><stop offset="1" stop-color="#f0b02a"/></radialGradient></defs><g fill="#eea10c"><polygon points="6.75,0.5 7.25,0.5 8.05,4 5.95,4" transform="rotate(0.0 7 7)"/><polygon points="6.75,0.5 7.25,0.5 8.05,4 5.95,4" transform="rotate(22.5 7 7)"/><polygon points="6.75,0.5 7.25,0.5 8.05,4 5.95,4" transform="rotate(45.0 7 7)"/><polygon points="6.75,0.5 7.25,0.5 8.05,4 5.95,4" transform="rotate(67.5 7 7)"/><polygon points="6.75,0.5 7.25,0.5 8.05,4 5.95,4" transform="rotate(90.0 7 7)"/><polygon points="6.75,0.5 7.25,0.5 8.05,4 5.95,4" transform="rotate(112.5 7 7)"/><polygon points="6.75,0.5 7.25,0.5 8.05,4 5.95,4" transform="rotate(135.0 7 7)"/><polygon points="6.75,0.5 7.25,0.5 8.05,4 5.95,4" transform="rotate(157.5 7 7)"/><polygon points="6.75,0.5 7.25,0.5 8.05,4 5.95,4" transform="rotate(180.0 7 7)"/><polygon points="6.75,0.5 7.25,0.5 8.05,4 5.95,4" transform="rotate(202.5 7 7)"/><polygon points="6.75,0.5 7.25,0.5 8.05,4 5.95,4" transform="rotate(225.0 7 7)"/><polygon points="6.75,0.5 7.25,0.5 8.05,4 5.95,4" transform="rotate(247.5 7 7)"/><polygon points="6.75,0.5 7.25,0.5 8.05,4 5.95,4" transform="rotate(270.0 7 7)"/><polygon points="6.75,0.5 7.25,0.5 8.05,4 5.95,4" transform="rotate(292.5 7 7)"/><polygon points="6.75,0.5 7.25,0.5 8.05,4 5.95,4" transform="rotate(315.0 7 7)"/><polygon points="6.75,0.5 7.25,0.5 8.05,4 5.95,4" transform="rotate(337.5 7 7)"/></g><circle cx="7" cy="7" r="3.8" fill="url(#sg)"/></svg><div class="t" style="left:1247px;top:493.84px;font-size:12px;color:#333333;font-weight:400;letter-spacing:-0.320px;">2023-09-09 17:40:11.773 EDT</div></div><div style="position:absolute;left:254px;top:52px;width:1px;height:459px;background:#0a90d8"></div><div style="position:absolute;left:254px;top:510px;width:1171px;height:1px;background:#0a90d8"></div><div style="position:absolute;left:254px;top:511px;width:1171px;height:40px;background:#fdfdfd"></div><div style="position:absolute;left:254px;top:551px;width:1171px;height:1px;background:#c8c6c8"></div><div class="t" style="left:264px;top:525.84px;font-size:12px;color:#333;font-weight:400;letter-spacing:-0.085px;">Score item as</div><div class="radio" style="left:349px;top:524px"></div><svg class="ic" style="left:370px;top:524px" width="16" height="16" viewBox="0 0 16 16"><polygon points="4.7,0.5 11.3,0.5 15.5,4.7 15.5,11.3 11.3,15.5 4.7,15.5 0.5,11.3 0.5,4.7" fill="#ff2a00" stroke="#d40000" stroke-width="1"/><polygon points="5.2,1.8 10.8,1.8 14.2,5.2 14.2,10.8 10.8,14.2 5.2,14.2 1.8,10.8 1.8,5.2" fill="none" stroke="#ff8a70" stroke-width="0.8"/><rect x="6.8" y="3.5" width="2.4" height="6.2" rx="0.6" fill="#fff"/><rect x="6.8" y="10.8" width="2.4" height="2.2" rx="0.6" fill="#fff"/></svg><div class="t" style="left:390px;top:525.84px;font-size:12px;color:#333;font-weight:400;letter-spacing:-0.167px;">Bad</div><div class="radio" style="left:446px;top:524px"></div><svg class="ic" style="left:467px;top:524px" width="17" height="16" viewBox="0 0 17 16"><path d="M8.5 1 L16.2 14.8 L0.8 14.8 Z" fill="#ffd21a" stroke="#f0a000" stroke-width="1.2" stroke-linejoin="round"/><rect x="7.4" y="5" width="2.2" height="5.5" fill="#fff"/><rect x="7.4" y="11.5" width="2.2" height="2" fill="#fff"/></svg><div class="t" style="left:487px;top:525.84px;font-size:12px;color:#333;font-weight:400;letter-spacing:-0.050px;">Suspicious</div><div class="radio" style="left:577px;top:524px"></div><svg class="ic" style="left:600px;top:525px" width="15" height="14" viewBox="0 0 15 14"><path d="M0.8 7.8 L5.2 12.2 L14.2 3.2 L12.2 2 L5.2 9.2 L2.8 6.4 Z" fill="#40c420" stroke="#2a9a10" stroke-width="0.5"/></svg><div class="t" style="left:619px;top:525.84px;font-size:12px;color:#333;font-weight:400;letter-spacing:-0.125px;">Good</div><div class="radio" style="left:683px;top:524px;border-color:#cfcfcf;background:radial-gradient(circle at 50% 30%,#fdfdfd,#ececec)"></div><div style="position:absolute;left:687.5px;top:528.5px;width:7px;height:7px;border-radius:50%;background:#b4b4b4"></div><svg class="ic" style="left:705px;top:524px" width="16" height="16" viewBox="0 0 16 16"><circle cx="8" cy="8" r="6.4" fill="#f6f7ff" stroke="#a8b4f0" stroke-width="1.1"/><text x="8" y="11.8" font-family="Liberation Sans" font-size="9.5" font-weight="700" text-anchor="middle" fill="#98a6ea">?</text></svg><div class="t" style="left:725px;top:525.84px;font-size:12px;color:#9c9c9c;font-weight:400;letter-spacing:-0.071px;">Unknown</div><svg class="ic" style="left:806px;top:523px" width="14" height="14" viewBox="0 0 14 14"><path d="M2.5 1.5 H11.5 Q13 1.5 13 3 V7 Q13 8.5 11.5 8.5 H6.5 L3.8 11.2 V8.5 H2.5 Q1 8.5 1 7 V3 Q1 1.5 2.5 1.5 Z" fill="#fff" stroke="#3090d0" stroke-width="1"/></svg><div class="t" style="left:825px;top:525.84px;font-size:12px;color:#1a8ed2;font-weight:400;letter-spacing:-0.118px;">Add Comment</div><div style="position:absolute;left:254px;top:552px;width:1171px;height:4px;background:#f8f6f8"></div><div style="position:absolute;left:254px;top:556px;width:1171px;height:1px;background:#cdc9cd"></div><div style="position:absolute;left:254px;top:557px;width:1171px;height:27px;background:#e9e9e9"></div><div style="position:absolute;left:255px;top:557px;width:83px;height:27px;background:#ffffff"></div><div style="position:absolute;left:255px;top:557px;width:83px;height:2px;background:#1a4a9c"></div><div class="t" style="left:255px;width:83px;top:565.84px;font-size:12px;color:#1a1a1a;text-align:center;letter-spacing:0.25px">Item Details</div><div style="position:absolute;left:338px;top:557px;width:36px;height:27px;background:#f3f0f3;border-left:1px solid #dedbde;border-top:1px solid #e6e3e6;box-sizing:border-box"></div><div class="t" style="left:338px;width:36px;top:565.84px;font-size:12px;color:#9a9a9a;text-align:center;letter-spacing:0.15px">File</div><div style="position:absolute;left:374px;top:557px;width:60px;height:27px;background:#f3f0f3;border-left:1px solid #dedbde;border-top:1px solid #e6e3e6;box-sizing:border-box"></div><div class="t" style="left:374px;width:60px;top:565.84px;font-size:12px;color:#9a9a9a;text-align:center;letter-spacing:0.15px">Process</div><div style="position:absolute;left:434px;top:557px;width:42px;height:27px;background:#f3f0f3;border-left:1px solid #dedbde;border-top:1px solid #e6e3e6;box-sizing:border-box"></div><div class="t" style="left:434px;width:42px;top:565.84px;font-size:12px;color:#9a9a9a;text-align:center;letter-spacing:0.15px">User</div><div style="position:absolute;left:476px;top:557px;width:107px;height:27px;background:#f3f0f3;border-left:1px solid #dedbde;border-top:1px solid #e6e3e6;box-sizing:border-box"></div><div class="t" style="left:476px;width:107px;top:565.84px;font-size:12px;color:#9a9a9a;text-align:center;letter-spacing:0.15px">Triggered Tasks</div><div style="position:absolute;left:583px;top:557px;width:99px;height:27px;background:#f3f0f3;border-left:1px solid #dedbde;border-top:1px solid #e6e3e6;box-sizing:border-box"></div><div class="t" style="left:583px;width:99px;top:565.84px;font-size:12px;color:#9a9a9a;text-align:center;letter-spacing:0.15px">Data Accessed</div><div style="position:absolute;left:682px;top:557px;width:69px;height:27px;background:#f3f0f3;border-left:1px solid #dedbde;border-top:1px solid #e6e3e6;box-sizing:border-box"></div><div class="t" style="left:682px;width:69px;top:565.84px;font-size:12px;color:#9a9a9a;text-align:center;letter-spacing:0.15px">Host Info</div><div style="position:absolute;left:751px;top:557px;width:99px;height:27px;background:#f3f0f3;border-left:1px solid #dedbde;border-top:1px solid #e6e3e6;box-sizing:border-box"></div><div class="t" style="left:751px;width:99px;top:565.84px;font-size:12px;color:#9a9a9a;text-align:center;letter-spacing:0.15px">Logon Session</div><div style="position:absolute;left:850px;top:557px;width:61px;height:27px;background:#fdfbfd;border-left:1px solid #dedbde;border-top:1px solid #e6e3e6;box-sizing:border-box"></div><div class="t" style="left:850px;width:61px;top:565.84px;font-size:12px;color:#2a2a2a;text-align:center;letter-spacing:0.15px">Sources</div><div style="position:absolute;left:911px;top:557px;width:124px;height:27px;background:#fdfbfd;border-left:1px solid #dedbde;border-top:1px solid #e6e3e6;box-sizing:border-box"></div><div class="t" style="left:911px;width:124px;top:565.84px;font-size:12px;color:#2a2a2a;text-align:center;letter-spacing:0.15px">Other Occurrences</div><div style="position:absolute;left:1035px;top:557px;width:107px;height:27px;background:#f3f0f3;border-left:1px solid #dedbde;border-top:1px solid #e6e3e6;box-sizing:border-box"></div><div class="t" style="left:1035px;width:107px;top:565.84px;font-size:12px;color:#9a9a9a;text-align:center;letter-spacing:0.15px">Analysis Results</div><div style="position:absolute;left:1142px;top:557px;width:1px;height:27px;background:#dedbde"></div><div style="position:absolute;left:254px;top:584px;width:1171px;height:27px;background:#fdf8de"></div><div class="t" style="left:269px;top:591.34px;font-size:12px;color:#333;font-weight:400;letter-spacing:-0.247px;">Item details for Seagate RSS LLC SRD0NF2 [Expansion Desktop Drive] MSFT30NAAAQQHW</div><div style="position:absolute;left:254px;top:611px;width:1171px;height:1px;background:#e6e6e6"></div><div style="position:absolute;left:254px;top:612px;width:1171px;height:167px;background:#f4f4f4"></div><div class="t" style="left:269px;top:628.84px;font-size:12px;color:#2a2a2a;font-weight:700;">Item Type:</div><div class="t" style="left:375px;top:628.84px;font-size:12px;color:#333;font-weight:400;letter-spacing:-0.087px;">Attached Device</div><div class="t" style="left:269px;top:667.84px;font-size:12px;color:#2a2a2a;font-weight:700;">Bus Type:</div><div class="t" style="left:375px;top:667.84px;font-size:12px;color:#333;font-weight:400;letter-spacing:-0.500px;">USB</div><div class="t" style="left:269px;top:696.84px;font-size:12px;color:#2a2a2a;font-weight:700;">Vendor Name:</div><div class="t" style="left:375px;top:696.84px;font-size:12px;color:#333;font-weight:400;letter-spacing:-0.273px;">Seagate RSS LLC</div><div class="t" style="left:269px;top:725.84px;font-size:12px;color:#2a2a2a;font-weight:700;">Product Name:</div><div class="t" style="left:375px;top:725.84px;font-size:12px;color:#333;font-weight:400;letter-spacing:-0.218px;">SRD0NF2 [Expansion Desktop Drive]</div><div class="t" style="left:269px;top:754.84px;font-size:12px;color:#2a2a2a;font-weight:700;">Serial Num:</div><div class="t" style="left:375px;top:754.84px;font-size:12px;color:#333;font-weight:400;letter-spacing:-0.479px;">MSFT30NAAAQQHW</div>
</body></html>
